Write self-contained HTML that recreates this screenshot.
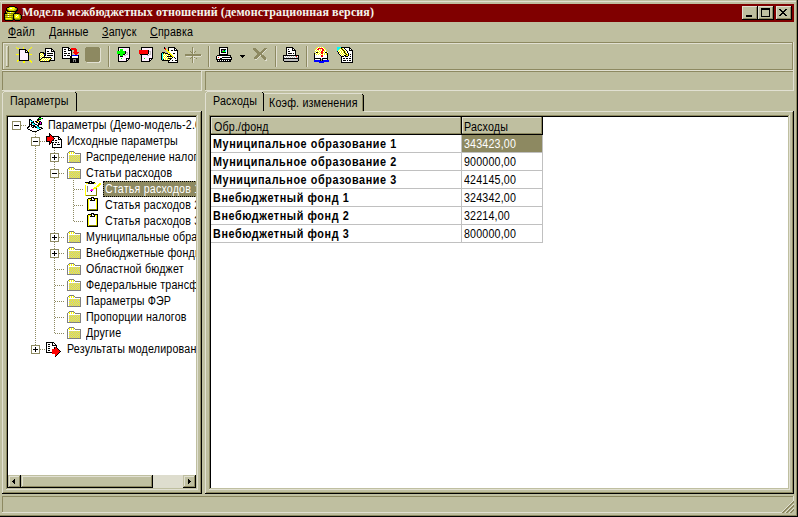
<!DOCTYPE html><html><head><meta charset="utf-8"><style>
html,body{margin:0;padding:0}
body{width:798px;height:517px;position:relative;overflow:hidden;background:#BFBFA0}
.a{position:absolute}
.t{position:absolute;font-family:"Liberation Sans",sans-serif;font-size:12px;line-height:14px;letter-spacing:0.2px;color:#000;white-space:nowrap;transform:scaleX(0.89);transform-origin:0 0}
u{text-decoration:underline;text-underline-offset:1px}
svg{display:block}
</style></head><body>
<div class="a" style="left:0px;top:1px;width:796px;height:1px;background:#E1E0D2;"></div>
<div class="a" style="left:1px;top:1px;width:1px;height:21px;background:#D6D5C2;"></div>
<div class="a" style="left:796px;top:0px;width:1px;height:516px;background:#8D8961;"></div>
<div class="a" style="left:797px;top:0px;width:1px;height:517px;background:#000000;"></div>
<div class="a" style="left:0px;top:515px;width:797px;height:1px;background:#8D8961;"></div>
<div class="a" style="left:0px;top:516px;width:798px;height:1px;background:#000000;"></div>
<div class="a" style="left:2px;top:4px;width:792px;height:18px;background:#800000;"></div>
<div class="t" style="left:22px;top:3px;font-family:'Liberation Serif',serif;font-weight:bold;font-size:12px;line-height:18px;letter-spacing:0.1px;color:#F4F4EC;transform:none;">Модель межбюджетных отношений (демонстрационная версия)</div>
<div class="a" style="left:742px;top:6px;width:16px;height:14px;background:#BFBFA0;"></div><div class="a" style="left:742px;top:6px;width:15px;height:1px;background:#E1E0D2;"></div><div class="a" style="left:742px;top:6px;width:1px;height:13px;background:#E1E0D2;"></div><div class="a" style="left:742px;top:19px;width:16px;height:1px;background:#000000;"></div><div class="a" style="left:757px;top:6px;width:1px;height:14px;background:#000000;"></div><div class="a" style="left:743px;top:18px;width:14px;height:1px;background:#8D8961;"></div><div class="a" style="left:756px;top:7px;width:1px;height:12px;background:#8D8961;"></div><div class="a" style="left:746px;top:15px;width:6px;height:2px;background:#000000;"></div>
<div class="a" style="left:758px;top:6px;width:16px;height:14px;background:#BFBFA0;"></div><div class="a" style="left:758px;top:6px;width:15px;height:1px;background:#E1E0D2;"></div><div class="a" style="left:758px;top:6px;width:1px;height:13px;background:#E1E0D2;"></div><div class="a" style="left:758px;top:19px;width:16px;height:1px;background:#000000;"></div><div class="a" style="left:773px;top:6px;width:1px;height:14px;background:#000000;"></div><div class="a" style="left:759px;top:18px;width:14px;height:1px;background:#8D8961;"></div><div class="a" style="left:772px;top:7px;width:1px;height:12px;background:#8D8961;"></div><div class="a" style="left:761px;top:8px;width:8px;height:1px;background:#000000;"></div><div class="a" style="left:761px;top:8px;width:1px;height:8px;background:#000000;"></div><div class="a" style="left:761px;top:16px;width:9px;height:1px;background:#000000;"></div><div class="a" style="left:769px;top:8px;width:1px;height:9px;background:#000000;"></div><div class="a" style="left:761px;top:9px;width:9px;height:1px;background:#000000;"></div>
<div class="a" style="left:776px;top:6px;width:16px;height:14px;background:#BFBFA0;"></div><div class="a" style="left:776px;top:6px;width:15px;height:1px;background:#E1E0D2;"></div><div class="a" style="left:776px;top:6px;width:1px;height:13px;background:#E1E0D2;"></div><div class="a" style="left:776px;top:19px;width:16px;height:1px;background:#000000;"></div><div class="a" style="left:791px;top:6px;width:1px;height:14px;background:#000000;"></div><div class="a" style="left:777px;top:18px;width:14px;height:1px;background:#8D8961;"></div><div class="a" style="left:790px;top:7px;width:1px;height:12px;background:#8D8961;"></div><svg style="position:absolute;left:779px;top:9px" width="8" height="7" viewBox="0 0 8 7" shape-rendering="crispEdges"><path fill="#000000" d="M0 0h2v1h-2zM6 0h2v1h-2zM1 1h2v1h-2zM5 1h2v1h-2zM2 2h4v1h-4zM3 3h2v1h-2zM2 4h4v1h-4zM1 5h2v1h-2zM5 5h2v1h-2zM0 6h2v1h-2zM6 6h2v1h-2z"/></svg>
<div class="t" style="left:8px;top:25px;"><u>Ф</u>айл</div>
<div class="t" style="left:49px;top:25px;"><u>Д</u>анные</div>
<div class="t" style="left:102px;top:25px;"><u>З</u>апуск</div>
<div class="t" style="left:150px;top:25px;"><u>С</u>правка</div>
<div class="a" style="left:2px;top:42px;width:791px;height:1px;background:#8D8961;"></div><div class="a" style="left:2px;top:42px;width:1px;height:28px;background:#8D8961;"></div><div class="a" style="left:2px;top:70px;width:792px;height:1px;background:#E1E0D2;"></div><div class="a" style="left:793px;top:42px;width:1px;height:29px;background:#E1E0D2;"></div>
<div class="a" style="left:3px;top:43px;width:789px;height:1px;background:#E1E0D2;"></div><div class="a" style="left:3px;top:43px;width:1px;height:26px;background:#E1E0D2;"></div><div class="a" style="left:3px;top:69px;width:790px;height:1px;background:#8D8961;"></div><div class="a" style="left:792px;top:43px;width:1px;height:27px;background:#8D8961;"></div>
<div class="a" style="left:6px;top:46px;width:2px;height:1px;background:#E1E0D2;"></div><div class="a" style="left:6px;top:46px;width:1px;height:20px;background:#E1E0D2;"></div><div class="a" style="left:6px;top:66px;width:3px;height:1px;background:#8D8961;"></div><div class="a" style="left:8px;top:46px;width:1px;height:21px;background:#8D8961;"></div>
<div class="a" style="left:108px;top:46px;width:1px;height:21px;background:#8D8961;"></div>
<div class="a" style="left:109px;top:46px;width:1px;height:21px;background:#E1E0D2;"></div>
<div class="a" style="left:208px;top:46px;width:1px;height:21px;background:#8D8961;"></div>
<div class="a" style="left:209px;top:46px;width:1px;height:21px;background:#E1E0D2;"></div>
<div class="a" style="left:275px;top:46px;width:1px;height:21px;background:#8D8961;"></div>
<div class="a" style="left:276px;top:46px;width:1px;height:21px;background:#E1E0D2;"></div>
<div class="a" style="left:306px;top:46px;width:1px;height:21px;background:#8D8961;"></div>
<div class="a" style="left:307px;top:46px;width:1px;height:21px;background:#E1E0D2;"></div>
<div class="a" style="left:2px;top:71px;width:199px;height:1px;background:#8D8961;"></div><div class="a" style="left:2px;top:71px;width:1px;height:19px;background:#8D8961;"></div><div class="a" style="left:2px;top:90px;width:200px;height:1px;background:#E1E0D2;"></div><div class="a" style="left:201px;top:71px;width:1px;height:20px;background:#E1E0D2;"></div>
<div class="a" style="left:205px;top:71px;width:588px;height:1px;background:#8D8961;"></div><div class="a" style="left:205px;top:71px;width:1px;height:19px;background:#8D8961;"></div><div class="a" style="left:205px;top:90px;width:589px;height:1px;background:#E1E0D2;"></div><div class="a" style="left:793px;top:71px;width:1px;height:20px;background:#E1E0D2;"></div>
<div class="a" style="left:77px;top:111px;width:125px;height:1px;background:#E1E0D2;"></div>
<div class="a" style="left:2px;top:93px;width:1px;height:400px;background:#E1E0D2;"></div>
<div class="a" style="left:200px;top:112px;width:1px;height:381px;background:#8D8961;"></div>
<div class="a" style="left:201px;top:111px;width:1px;height:383px;background:#000000;"></div>
<div class="a" style="left:3px;top:492px;width:198px;height:1px;background:#8D8961;"></div>
<div class="a" style="left:2px;top:493px;width:200px;height:1px;background:#000000;"></div>
<div class="a" style="left:4px;top:91px;width:71px;height:1px;background:#E1E0D2;"></div>
<div class="a" style="left:3px;top:92px;width:1px;height:1px;background:#E1E0D2;"></div>
<div class="a" style="left:75px;top:92px;width:1px;height:1px;background:#000000;"></div>
<div class="a" style="left:76px;top:93px;width:1px;height:18px;background:#000000;"></div>
<div class="t" style="left:10px;top:94px;">Параметры</div>
<div class="a" style="left:8px;top:117px;width:188px;height:371px;background:#FFFFFF;"></div>
<div class="a" style="left:6px;top:115px;width:191px;height:1px;background:#8D8961;"></div>
<div class="a" style="left:6px;top:115px;width:1px;height:375px;background:#8D8961;"></div>
<div class="a" style="left:7px;top:116px;width:189px;height:1px;background:#000000;"></div>
<div class="a" style="left:7px;top:116px;width:1px;height:372px;background:#000000;"></div>
<div class="a" style="left:196px;top:116px;width:1px;height:373px;background:#BFBFA0;"></div>
<div class="a" style="left:7px;top:488px;width:190px;height:1px;background:#BFBFA0;"></div>
<div class="a" style="left:197px;top:115px;width:1px;height:375px;background:#E1E0D2;"></div>
<div class="a" style="left:6px;top:489px;width:192px;height:1px;background:#E1E0D2;"></div>
<div class="a" style="left:364px;top:111px;width:430px;height:1px;background:#E1E0D2;"></div>
<div class="a" style="left:205px;top:93px;width:1px;height:400px;background:#E1E0D2;"></div>
<div class="a" style="left:792px;top:112px;width:1px;height:381px;background:#8D8961;"></div>
<div class="a" style="left:793px;top:111px;width:1px;height:383px;background:#000000;"></div>
<div class="a" style="left:206px;top:492px;width:587px;height:1px;background:#8D8961;"></div>
<div class="a" style="left:205px;top:493px;width:589px;height:1px;background:#000000;"></div>
<div class="a" style="left:207px;top:91px;width:56px;height:1px;background:#E1E0D2;"></div>
<div class="a" style="left:206px;top:92px;width:1px;height:1px;background:#E1E0D2;"></div>
<div class="a" style="left:262px;top:92px;width:1px;height:1px;background:#000000;"></div>
<div class="a" style="left:263px;top:93px;width:1px;height:18px;background:#000000;"></div>
<div class="t" style="left:213px;top:94px;">Расходы</div>
<div class="a" style="left:264px;top:93px;width:98px;height:1px;background:#E1E0D2;"></div>
<div class="a" style="left:362px;top:94px;width:1px;height:1px;background:#000000;"></div>
<div class="a" style="left:363px;top:95px;width:1px;height:16px;background:#000000;"></div>
<div class="a" style="left:362px;top:95px;width:1px;height:16px;background:#8D8961;"></div>
<div class="t" style="left:269px;top:96px;">Коэф. изменения</div>
<div class="a" style="left:211px;top:117px;width:578px;height:371px;background:#FFFFFF;"></div>
<div class="a" style="left:209px;top:115px;width:581px;height:1px;background:#8D8961;"></div>
<div class="a" style="left:209px;top:115px;width:1px;height:375px;background:#8D8961;"></div>
<div class="a" style="left:210px;top:116px;width:579px;height:1px;background:#000000;"></div>
<div class="a" style="left:210px;top:116px;width:1px;height:373px;background:#000000;"></div>
<div class="a" style="left:788px;top:116px;width:1px;height:373px;background:#BFBFA0;"></div>
<div class="a" style="left:210px;top:488px;width:579px;height:1px;background:#BFBFA0;"></div>
<div class="a" style="left:789px;top:115px;width:1px;height:375px;background:#E1E0D2;"></div>
<div class="a" style="left:209px;top:489px;width:581px;height:1px;background:#E1E0D2;"></div>
<div class="a" style="left:211px;top:117px;width:250px;height:17px;background:#BFBFA0;"></div>
<div class="a" style="left:211px;top:117px;width:249px;height:1px;background:#E1E0D2;"></div>
<div class="a" style="left:211px;top:117px;width:1px;height:16px;background:#E1E0D2;"></div>
<div class="a" style="left:211px;top:133px;width:250px;height:1px;background:#8D8961;"></div>
<div class="a" style="left:460px;top:117px;width:1px;height:17px;background:#8D8961;"></div>
<div class="a" style="left:462px;top:117px;width:80px;height:17px;background:#BFBFA0;"></div>
<div class="a" style="left:462px;top:117px;width:79px;height:1px;background:#E1E0D2;"></div>
<div class="a" style="left:462px;top:117px;width:1px;height:16px;background:#E1E0D2;"></div>
<div class="a" style="left:462px;top:133px;width:80px;height:1px;background:#8D8961;"></div>
<div class="a" style="left:541px;top:117px;width:1px;height:17px;background:#8D8961;"></div>
<div class="a" style="left:211px;top:134px;width:332px;height:1px;background:#000000;"></div>
<div class="a" style="left:461px;top:117px;width:1px;height:18px;background:#000000;"></div>
<div class="a" style="left:542px;top:116px;width:1px;height:19px;background:#000000;"></div>
<div class="t" style="left:214px;top:120px;">Обр./фонд</div>
<div class="t" style="left:464px;top:120px;">Расходы</div>
<div class="a" style="left:211px;top:152px;width:332px;height:1px;background:#C0C0C0;"></div>
<div class="a" style="left:462px;top:135px;width:80px;height:17px;background:#8D8961;"></div>
<div class="t" style="left:213px;top:137px;font-weight:bold;letter-spacing:0.65px;transform:scaleX(0.9);">Муниципальное образование 1</div>
<div class="t" style="left:464px;top:137px;color:#FFFFFF;">343423,00</div>
<div class="a" style="left:211px;top:170px;width:332px;height:1px;background:#C0C0C0;"></div>
<div class="t" style="left:213px;top:155px;font-weight:bold;letter-spacing:0.65px;transform:scaleX(0.9);">Муниципальное образование 2</div>
<div class="t" style="left:464px;top:155px;">900000,00</div>
<div class="a" style="left:211px;top:188px;width:332px;height:1px;background:#C0C0C0;"></div>
<div class="t" style="left:213px;top:173px;font-weight:bold;letter-spacing:0.65px;transform:scaleX(0.9);">Муниципальное образование 3</div>
<div class="t" style="left:464px;top:173px;">424145,00</div>
<div class="a" style="left:211px;top:206px;width:332px;height:1px;background:#C0C0C0;"></div>
<div class="t" style="left:213px;top:191px;font-weight:bold;letter-spacing:0.65px;transform:scaleX(0.9);">Внебюджетный фонд 1</div>
<div class="t" style="left:464px;top:191px;">324342,00</div>
<div class="a" style="left:211px;top:224px;width:332px;height:1px;background:#C0C0C0;"></div>
<div class="t" style="left:213px;top:209px;font-weight:bold;letter-spacing:0.65px;transform:scaleX(0.9);">Внебюджетный фонд 2</div>
<div class="t" style="left:464px;top:209px;">32214,00</div>
<div class="a" style="left:211px;top:242px;width:332px;height:1px;background:#C0C0C0;"></div>
<div class="t" style="left:213px;top:227px;font-weight:bold;letter-spacing:0.65px;transform:scaleX(0.9);">Внебюджетный фонд 3</div>
<div class="t" style="left:464px;top:227px;">800000,00</div>
<div class="a" style="left:461px;top:135px;width:1px;height:108px;background:#C0C0C0;"></div>
<div class="a" style="left:542px;top:135px;width:1px;height:108px;background:#C0C0C0;"></div>
<div class="a" style="left:2px;top:496px;width:791px;height:1px;background:#8D8961;"></div><div class="a" style="left:2px;top:496px;width:1px;height:16px;background:#8D8961;"></div><div class="a" style="left:2px;top:512px;width:792px;height:1px;background:#E1E0D2;"></div><div class="a" style="left:793px;top:496px;width:1px;height:17px;background:#E1E0D2;"></div>
<svg style="position:absolute;left:781px;top:500px" width="13" height="13" viewBox="0 0 13 13" shape-rendering="crispEdges"><path fill="#E1E0D2" d="M12 0h1v1h-1zM11 1h1v1h-1zM10 2h1v1h-1zM9 3h1v1h-1zM8 4h1v1h-1zM12 4h1v1h-1zM7 5h1v1h-1zM11 5h1v1h-1zM6 6h1v1h-1zM10 6h1v1h-1zM5 7h1v1h-1zM9 7h1v1h-1zM4 8h1v1h-1zM8 8h1v1h-1zM12 8h1v1h-1zM3 9h1v1h-1zM7 9h1v1h-1zM11 9h1v1h-1zM2 10h1v1h-1zM6 10h1v1h-1zM10 10h1v1h-1zM1 11h1v1h-1zM5 11h1v1h-1zM9 11h1v1h-1zM0 12h1v1h-1zM4 12h1v1h-1zM8 12h1v1h-1z"/><path fill="#8D8961" d="M12 1h1v1h-1zM11 2h2v1h-2zM10 3h2v1h-2zM9 4h2v1h-2zM8 5h2v1h-2zM12 5h1v1h-1zM7 6h2v1h-2zM11 6h2v1h-2zM6 7h2v1h-2zM10 7h2v1h-2zM5 8h2v1h-2zM9 8h2v1h-2zM4 9h2v1h-2zM8 9h2v1h-2zM12 9h1v1h-1zM3 10h2v1h-2zM7 10h2v1h-2zM11 10h2v1h-2zM2 11h2v1h-2zM6 11h2v1h-2zM10 11h2v1h-2zM1 12h2v1h-2zM5 12h2v1h-2zM9 12h2v1h-2z"/><path fill="#BFBFA0" d="M12 3h1v1h-1zM11 4h1v1h-1zM10 5h1v1h-1zM9 6h1v1h-1zM8 7h1v1h-1zM12 7h1v1h-1zM7 8h1v1h-1zM11 8h1v1h-1zM6 9h1v1h-1zM10 9h1v1h-1zM5 10h1v1h-1zM9 10h1v1h-1zM4 11h1v1h-1zM8 11h1v1h-1zM12 11h1v1h-1zM3 12h1v1h-1zM7 12h1v1h-1zM11 12h2v1h-2z"/></svg>
<div class="a" style="left:8px;top:117px;width:188px;height:358px;overflow:hidden"><div class="a" style="left:-8px;top:-117px;width:798px;height:517px"><div class="a" style="left:35px;top:132px;width:1px;height:214px;background:repeating-linear-gradient(to bottom,#8D8961 0 1px,transparent 1px 2px)"></div><div class="a" style="left:54px;top:148px;width:1px;height:186px;background:repeating-linear-gradient(to bottom,#8D8961 0 1px,transparent 1px 2px)"></div><div class="a" style="left:73px;top:180px;width:1px;height:42px;background:repeating-linear-gradient(to bottom,#8D8961 0 1px,transparent 1px 2px)"></div><div class="a" style="left:21px;top:125px;width:5px;height:1px;background:repeating-linear-gradient(to right,#8D8961 0 1px,transparent 1px 2px)"></div><div class="a" style="left:12px;top:121px;width:9px;height:9px;background:#FFFFFF;box-sizing:border-box;border:1px solid #8D8961;"></div><div class="a" style="left:14px;top:125px;width:5px;height:1px;background:#000000;"></div><svg style="position:absolute;left:26px;top:116px" width="19" height="16" viewBox="0 0 19 16" shape-rendering="crispEdges"><path fill="#000000" d="M13 1h2v1h-2zM12 2h1v1h-1zM16 2h1v1h-1zM3 3h2v1h-2zM11 3h4v1h-4zM3 4h1v1h-1zM5 4h1v1h-1zM11 4h2v1h-2zM3 5h1v1h-1zM7 5h1v1h-1zM9 5h2v1h-2zM13 5h2v1h-2zM3 6h1v1h-1zM5 6h3v1h-3zM10 6h2v1h-2zM13 6h1v1h-1zM15 6h1v1h-1zM3 7h1v1h-1zM5 7h1v1h-1zM8 7h1v1h-1zM12 7h2v1h-2zM15 7h1v1h-1zM3 8h3v1h-3zM9 8h2v1h-2zM12 8h4v1h-4zM3 9h1v1h-1zM5 9h4v1h-4zM11 9h2v1h-2zM2 10h2v1h-2zM5 10h1v1h-1zM7 10h3v1h-3zM12 10h1v1h-1zM1 11h2v1h-2zM6 11h2v1h-2zM9 11h2v1h-2zM13 11h3v1h-3zM1 12h1v1h-1zM15 12h2v1h-2zM2 13h2v1h-2zM13 13h2v1h-2zM4 14h2v1h-2zM11 14h2v1h-2zM6 15h5v1h-5z"/><path fill="#00FF00" d="M13 2h3v1h-3z"/><path fill="#00FFFF" d="M4 4h1v1h-1zM5 5h2v1h-2zM6 7h2v1h-2zM7 8h2v1h-2zM10 10h2v1h-2zM11 11h2v1h-2zM11 12h3v1h-3z"/><path fill="#FFFFFF" d="M4 5h1v1h-1zM4 6h1v1h-1zM12 6h1v1h-1zM4 7h1v1h-1zM11 7h1v1h-1zM6 8h1v1h-1zM4 9h1v1h-1zM9 9h2v1h-2zM4 10h1v1h-1zM6 10h1v1h-1zM3 11h3v1h-3zM8 11h1v1h-1zM2 12h9v1h-9zM14 12h1v1h-1zM4 13h9v1h-9zM6 14h5v1h-5z"/><path fill="#FFFF00" d="M11 5h2v1h-2z"/><path fill="#FF00FF" d="M14 6h1v1h-1zM14 7h1v1h-1z"/></svg><div class="t" style="left:48px;top:118px;white-space:nowrap;">Параметры (Демо-модель-2.0)</div><div class="a" style="left:40px;top:141px;width:5px;height:1px;background:repeating-linear-gradient(to right,#8D8961 0 1px,transparent 1px 2px)"></div><div class="a" style="left:31px;top:137px;width:9px;height:9px;background:#FFFFFF;box-sizing:border-box;border:1px solid #8D8961;"></div><div class="a" style="left:33px;top:141px;width:5px;height:1px;background:#000000;"></div><svg style="position:absolute;left:45px;top:132px" width="19" height="16" viewBox="0 0 19 16" shape-rendering="crispEdges"><path fill="#000000" d="M4 1h1v1h-1zM4 2h2v1h-2zM4 3h1v1h-1zM6 3h1v1h-1zM1 4h4v1h-4zM7 4h7v1h-7zM1 5h1v1h-1zM8 5h1v1h-1zM13 5h2v1h-2zM1 6h1v1h-1zM9 6h1v1h-1zM13 6h1v1h-1zM15 6h1v1h-1zM1 7h1v1h-1zM8 7h1v1h-1zM13 7h4v1h-4zM1 8h1v1h-1zM7 8h2v1h-2zM10 8h2v1h-2zM16 8h1v1h-1zM1 9h4v1h-4zM6 9h1v1h-1zM16 9h1v1h-1zM4 10h1v1h-1zM6 10h3v1h-3zM10 10h2v1h-2zM13 10h1v1h-1zM16 10h1v1h-1zM4 11h2v1h-2zM7 11h1v1h-1zM16 11h1v1h-1zM4 12h1v1h-1zM7 12h1v1h-1zM9 12h2v1h-2zM12 12h3v1h-3zM16 12h1v1h-1zM7 13h1v1h-1zM16 13h1v1h-1zM7 14h1v1h-1zM16 14h1v1h-1zM7 15h10v1h-10z"/><path fill="#FF0000" d="M5 3h1v1h-1zM5 4h2v1h-2zM2 5h6v1h-6zM2 6h7v1h-7zM2 7h6v1h-6zM2 8h5v1h-5zM5 9h1v1h-1zM5 10h1v1h-1z"/><path fill="#FFFFFF" d="M9 5h4v1h-4zM10 6h3v1h-3zM14 6h1v1h-1zM9 7h4v1h-4zM9 8h1v1h-1zM12 8h4v1h-4zM7 9h9v1h-9zM9 10h1v1h-1zM12 10h1v1h-1zM14 10h2v1h-2zM8 11h8v1h-8zM8 12h1v1h-1zM11 12h1v1h-1zM15 12h1v1h-1zM8 13h8v1h-8zM8 14h8v1h-8z"/></svg><div class="t" style="left:67px;top:134px;white-space:nowrap;">Исходные параметры</div><div class="a" style="left:59px;top:157px;width:5px;height:1px;background:repeating-linear-gradient(to right,#8D8961 0 1px,transparent 1px 2px)"></div><div class="a" style="left:50px;top:153px;width:9px;height:9px;background:#FFFFFF;box-sizing:border-box;border:1px solid #8D8961;"></div><div class="a" style="left:52px;top:157px;width:5px;height:1px;background:#000000;"></div><div class="a" style="left:54px;top:155px;width:1px;height:5px;background:#000000;"></div><svg style="position:absolute;left:64px;top:148px" width="19" height="15" viewBox="0 0 19 15" shape-rendering="crispEdges"><path fill="#808080" d="M5 3h5v1h-5zM4 4h1v1h-1zM10 4h1v1h-1zM3 5h1v1h-1zM11 5h6v1h-6zM3 6h1v1h-1zM16 6h1v1h-1zM3 7h1v1h-1zM16 7h1v1h-1zM3 8h1v1h-1zM16 8h1v1h-1zM3 9h1v1h-1zM16 9h1v1h-1zM3 10h1v1h-1zM16 10h1v1h-1zM3 11h1v1h-1zM16 11h1v1h-1zM3 12h1v1h-1zM16 12h1v1h-1zM3 13h1v1h-1zM16 13h1v1h-1zM3 14h14v1h-14z"/><path fill="#FFFF00" d="M5 4h1v1h-1zM7 4h1v1h-1zM9 4h1v1h-1zM5 5h1v1h-1zM7 5h1v1h-1zM9 5h1v1h-1zM5 7h1v1h-1zM7 7h1v1h-1zM9 7h1v1h-1zM11 7h1v1h-1zM13 7h1v1h-1zM15 7h1v1h-1zM6 8h1v1h-1zM8 8h1v1h-1zM10 8h1v1h-1zM12 8h1v1h-1zM14 8h1v1h-1zM5 9h1v1h-1zM7 9h1v1h-1zM9 9h1v1h-1zM11 9h1v1h-1zM13 9h1v1h-1zM15 9h1v1h-1zM6 10h1v1h-1zM8 10h1v1h-1zM10 10h1v1h-1zM12 10h1v1h-1zM14 10h1v1h-1zM5 11h1v1h-1zM7 11h1v1h-1zM9 11h1v1h-1zM11 11h1v1h-1zM13 11h1v1h-1zM15 11h1v1h-1zM6 12h1v1h-1zM8 12h1v1h-1zM10 12h1v1h-1zM12 12h1v1h-1zM14 12h1v1h-1zM5 13h1v1h-1zM7 13h1v1h-1zM9 13h1v1h-1zM11 13h1v1h-1zM13 13h1v1h-1zM15 13h1v1h-1z"/><path fill="#FFFFFF" d="M6 4h1v1h-1zM8 4h1v1h-1zM4 5h1v1h-1zM6 5h1v1h-1zM8 5h1v1h-1zM10 5h1v1h-1zM4 6h12v1h-12zM4 7h1v1h-1zM4 8h1v1h-1zM4 9h1v1h-1zM4 10h1v1h-1zM4 11h1v1h-1zM4 12h1v1h-1zM4 13h1v1h-1z"/><path fill="#B4B4CC" d="M6 7h1v1h-1zM8 7h1v1h-1zM10 7h1v1h-1zM12 7h1v1h-1zM14 7h1v1h-1zM5 8h1v1h-1zM7 8h1v1h-1zM9 8h1v1h-1zM11 8h1v1h-1zM13 8h1v1h-1zM15 8h1v1h-1zM6 9h1v1h-1zM8 9h1v1h-1zM10 9h1v1h-1zM12 9h1v1h-1zM14 9h1v1h-1zM5 10h1v1h-1zM7 10h1v1h-1zM9 10h1v1h-1zM11 10h1v1h-1zM13 10h1v1h-1zM15 10h1v1h-1zM6 11h1v1h-1zM8 11h1v1h-1zM10 11h1v1h-1zM12 11h1v1h-1zM14 11h1v1h-1zM5 12h1v1h-1zM7 12h1v1h-1zM9 12h1v1h-1zM11 12h1v1h-1zM13 12h1v1h-1zM15 12h1v1h-1zM6 13h1v1h-1zM8 13h1v1h-1zM10 13h1v1h-1zM12 13h1v1h-1zM14 13h1v1h-1z"/></svg><div class="t" style="left:86px;top:150px;white-space:nowrap;">Распределение налогов</div><div class="a" style="left:59px;top:173px;width:5px;height:1px;background:repeating-linear-gradient(to right,#8D8961 0 1px,transparent 1px 2px)"></div><div class="a" style="left:50px;top:169px;width:9px;height:9px;background:#FFFFFF;box-sizing:border-box;border:1px solid #8D8961;"></div><div class="a" style="left:52px;top:173px;width:5px;height:1px;background:#000000;"></div><svg style="position:absolute;left:64px;top:164px" width="19" height="15" viewBox="0 0 19 15" shape-rendering="crispEdges"><path fill="#808080" d="M5 3h5v1h-5zM4 4h1v1h-1zM10 4h1v1h-1zM3 5h1v1h-1zM11 5h6v1h-6zM3 6h1v1h-1zM16 6h1v1h-1zM3 7h1v1h-1zM16 7h1v1h-1zM3 8h1v1h-1zM16 8h1v1h-1zM3 9h1v1h-1zM16 9h1v1h-1zM3 10h1v1h-1zM16 10h1v1h-1zM3 11h1v1h-1zM16 11h1v1h-1zM3 12h1v1h-1zM16 12h1v1h-1zM3 13h1v1h-1zM16 13h1v1h-1zM3 14h14v1h-14z"/><path fill="#FFFF00" d="M5 4h1v1h-1zM7 4h1v1h-1zM9 4h1v1h-1zM5 5h1v1h-1zM7 5h1v1h-1zM9 5h1v1h-1zM5 7h1v1h-1zM7 7h1v1h-1zM9 7h1v1h-1zM11 7h1v1h-1zM13 7h1v1h-1zM15 7h1v1h-1zM6 8h1v1h-1zM8 8h1v1h-1zM10 8h1v1h-1zM12 8h1v1h-1zM14 8h1v1h-1zM5 9h1v1h-1zM7 9h1v1h-1zM9 9h1v1h-1zM11 9h1v1h-1zM13 9h1v1h-1zM15 9h1v1h-1zM6 10h1v1h-1zM8 10h1v1h-1zM10 10h1v1h-1zM12 10h1v1h-1zM14 10h1v1h-1zM5 11h1v1h-1zM7 11h1v1h-1zM9 11h1v1h-1zM11 11h1v1h-1zM13 11h1v1h-1zM15 11h1v1h-1zM6 12h1v1h-1zM8 12h1v1h-1zM10 12h1v1h-1zM12 12h1v1h-1zM14 12h1v1h-1zM5 13h1v1h-1zM7 13h1v1h-1zM9 13h1v1h-1zM11 13h1v1h-1zM13 13h1v1h-1zM15 13h1v1h-1z"/><path fill="#FFFFFF" d="M6 4h1v1h-1zM8 4h1v1h-1zM4 5h1v1h-1zM6 5h1v1h-1zM8 5h1v1h-1zM10 5h1v1h-1zM4 6h12v1h-12zM4 7h1v1h-1zM4 8h1v1h-1zM4 9h1v1h-1zM4 10h1v1h-1zM4 11h1v1h-1zM4 12h1v1h-1zM4 13h1v1h-1z"/><path fill="#B4B4CC" d="M6 7h1v1h-1zM8 7h1v1h-1zM10 7h1v1h-1zM12 7h1v1h-1zM14 7h1v1h-1zM5 8h1v1h-1zM7 8h1v1h-1zM9 8h1v1h-1zM11 8h1v1h-1zM13 8h1v1h-1zM15 8h1v1h-1zM6 9h1v1h-1zM8 9h1v1h-1zM10 9h1v1h-1zM12 9h1v1h-1zM14 9h1v1h-1zM5 10h1v1h-1zM7 10h1v1h-1zM9 10h1v1h-1zM11 10h1v1h-1zM13 10h1v1h-1zM15 10h1v1h-1zM6 11h1v1h-1zM8 11h1v1h-1zM10 11h1v1h-1zM12 11h1v1h-1zM14 11h1v1h-1zM5 12h1v1h-1zM7 12h1v1h-1zM9 12h1v1h-1zM11 12h1v1h-1zM13 12h1v1h-1zM15 12h1v1h-1zM6 13h1v1h-1zM8 13h1v1h-1zM10 13h1v1h-1zM12 13h1v1h-1zM14 13h1v1h-1z"/></svg><div class="t" style="left:86px;top:166px;white-space:nowrap;">Статьи расходов</div><div class="a" style="left:74px;top:189px;width:9px;height:1px;background:repeating-linear-gradient(to right,#8D8961 0 1px,transparent 1px 2px)"></div><svg style="position:absolute;left:83px;top:180px" width="19" height="16" viewBox="0 0 19 16" shape-rendering="crispEdges"><path fill="#000000" d="M6 1h3v1h-3zM2 2h5v1h-5zM8 2h4v1h-4zM5 3h6v1h-6zM8 11h1v1h-1z"/><path fill="#FFFFFF" d="M7 2h1v1h-1zM3 4h9v1h-9zM3 5h9v1h-9zM3 6h1v1h-1zM5 6h7v1h-7zM3 7h1v1h-1zM5 7h6v1h-6zM3 8h1v1h-1zM5 8h5v1h-5zM3 9h1v1h-1zM5 9h3v1h-3zM11 9h2v1h-2zM3 10h1v1h-1zM5 10h2v1h-2zM10 10h3v1h-3zM3 11h1v1h-1zM5 11h3v1h-3zM9 11h4v1h-4zM3 12h10v1h-10zM3 13h10v1h-10zM3 14h10v1h-10z"/><path fill="#FFFF00" d="M3 3h2v1h-2zM11 3h2v1h-2zM16 3h2v1h-2zM15 4h3v1h-3zM2 5h1v1h-1zM14 5h3v1h-3zM2 6h1v1h-1zM13 6h3v1h-3zM2 7h1v1h-1zM11 7h3v1h-3zM2 8h1v1h-1zM10 8h3v1h-3zM2 9h1v1h-1zM10 9h1v1h-1zM2 10h1v1h-1zM2 11h1v1h-1zM2 12h1v1h-1zM2 13h1v1h-1zM2 14h1v1h-1zM2 15h1v1h-1z"/><path fill="#808080" d="M4 6h1v1h-1zM4 7h1v1h-1zM4 8h1v1h-1zM4 9h1v1h-1zM4 10h1v1h-1zM4 11h1v1h-1z"/><path fill="#808000" d="M13 8h1v1h-1zM13 9h1v1h-1zM13 10h1v1h-1zM13 11h1v1h-1zM13 12h1v1h-1zM13 13h1v1h-1zM13 14h1v1h-1zM3 15h11v1h-11z"/><path fill="#FF00FF" d="M8 9h2v1h-2zM7 10h3v1h-3z"/></svg><div class="a" style="left:103px;top:181px;width:200px;height:16px;background:#8D8961;"></div><div class="a" style="left:103px;top:181px;width:200px;height:16px;box-sizing:border-box;border:1px dotted #000"></div><div class="t" style="left:105px;top:182px;color:#FFFFFF;white-space:nowrap;">Статья расходов 1</div><div class="a" style="left:74px;top:205px;width:9px;height:1px;background:repeating-linear-gradient(to right,#8D8961 0 1px,transparent 1px 2px)"></div><svg style="position:absolute;left:83px;top:196px" width="19" height="15" viewBox="0 0 19 15" shape-rendering="crispEdges"><path fill="#000000" d="M8 1h3v1h-3zM5 2h4v1h-4zM10 2h5v1h-5zM4 3h1v1h-1zM8 3h1v1h-1zM11 3h1v1h-1zM14 3h1v1h-1zM4 4h1v1h-1zM7 4h5v1h-5zM14 4h1v1h-1zM4 5h1v1h-1zM14 5h1v1h-1zM4 6h1v1h-1zM14 6h1v1h-1zM4 7h1v1h-1zM14 7h1v1h-1zM4 8h1v1h-1zM14 8h1v1h-1zM4 9h1v1h-1zM14 9h1v1h-1zM4 10h1v1h-1zM14 10h1v1h-1zM4 11h1v1h-1zM14 11h1v1h-1zM4 12h1v1h-1zM14 12h1v1h-1zM4 13h1v1h-1zM14 13h1v1h-1zM4 14h11v1h-11z"/><path fill="#FFFFFF" d="M9 2h1v1h-1zM9 3h2v1h-2zM6 4h1v1h-1zM12 4h1v1h-1zM6 5h7v1h-7zM6 6h7v1h-7zM6 7h7v1h-7zM6 8h7v1h-7zM6 9h7v1h-7zM6 10h7v1h-7zM6 11h7v1h-7zM6 12h7v1h-7z"/><path fill="#FFFF00" d="M5 3h3v1h-3zM12 3h2v1h-2zM5 4h1v1h-1zM13 4h1v1h-1zM5 5h1v1h-1zM13 5h1v1h-1zM5 6h1v1h-1zM13 6h1v1h-1zM5 7h1v1h-1zM13 7h1v1h-1zM5 8h1v1h-1zM13 8h1v1h-1zM5 9h1v1h-1zM13 9h1v1h-1zM5 10h1v1h-1zM13 10h1v1h-1zM5 11h1v1h-1zM13 11h1v1h-1zM5 12h1v1h-1zM13 12h1v1h-1zM5 13h1v1h-1z"/><path fill="#808000" d="M6 13h8v1h-8z"/></svg><div class="t" style="left:105px;top:198px;white-space:nowrap;">Статья расходов 2</div><div class="a" style="left:74px;top:221px;width:9px;height:1px;background:repeating-linear-gradient(to right,#8D8961 0 1px,transparent 1px 2px)"></div><svg style="position:absolute;left:83px;top:212px" width="19" height="15" viewBox="0 0 19 15" shape-rendering="crispEdges"><path fill="#000000" d="M8 1h3v1h-3zM5 2h4v1h-4zM10 2h5v1h-5zM4 3h1v1h-1zM8 3h1v1h-1zM11 3h1v1h-1zM14 3h1v1h-1zM4 4h1v1h-1zM7 4h5v1h-5zM14 4h1v1h-1zM4 5h1v1h-1zM14 5h1v1h-1zM4 6h1v1h-1zM14 6h1v1h-1zM4 7h1v1h-1zM14 7h1v1h-1zM4 8h1v1h-1zM14 8h1v1h-1zM4 9h1v1h-1zM14 9h1v1h-1zM4 10h1v1h-1zM14 10h1v1h-1zM4 11h1v1h-1zM14 11h1v1h-1zM4 12h1v1h-1zM14 12h1v1h-1zM4 13h1v1h-1zM14 13h1v1h-1zM4 14h11v1h-11z"/><path fill="#FFFFFF" d="M9 2h1v1h-1zM9 3h2v1h-2zM6 4h1v1h-1zM12 4h1v1h-1zM6 5h7v1h-7zM6 6h7v1h-7zM6 7h7v1h-7zM6 8h7v1h-7zM6 9h7v1h-7zM6 10h7v1h-7zM6 11h7v1h-7zM6 12h7v1h-7z"/><path fill="#FFFF00" d="M5 3h3v1h-3zM12 3h2v1h-2zM5 4h1v1h-1zM13 4h1v1h-1zM5 5h1v1h-1zM13 5h1v1h-1zM5 6h1v1h-1zM13 6h1v1h-1zM5 7h1v1h-1zM13 7h1v1h-1zM5 8h1v1h-1zM13 8h1v1h-1zM5 9h1v1h-1zM13 9h1v1h-1zM5 10h1v1h-1zM13 10h1v1h-1zM5 11h1v1h-1zM13 11h1v1h-1zM5 12h1v1h-1zM13 12h1v1h-1zM5 13h1v1h-1z"/><path fill="#808000" d="M6 13h8v1h-8z"/></svg><div class="t" style="left:105px;top:214px;white-space:nowrap;">Статья расходов 3</div><div class="a" style="left:59px;top:237px;width:5px;height:1px;background:repeating-linear-gradient(to right,#8D8961 0 1px,transparent 1px 2px)"></div><div class="a" style="left:50px;top:233px;width:9px;height:9px;background:#FFFFFF;box-sizing:border-box;border:1px solid #8D8961;"></div><div class="a" style="left:52px;top:237px;width:5px;height:1px;background:#000000;"></div><div class="a" style="left:54px;top:235px;width:1px;height:5px;background:#000000;"></div><svg style="position:absolute;left:64px;top:228px" width="19" height="15" viewBox="0 0 19 15" shape-rendering="crispEdges"><path fill="#808080" d="M5 3h5v1h-5zM4 4h1v1h-1zM10 4h1v1h-1zM3 5h1v1h-1zM11 5h6v1h-6zM3 6h1v1h-1zM16 6h1v1h-1zM3 7h1v1h-1zM16 7h1v1h-1zM3 8h1v1h-1zM16 8h1v1h-1zM3 9h1v1h-1zM16 9h1v1h-1zM3 10h1v1h-1zM16 10h1v1h-1zM3 11h1v1h-1zM16 11h1v1h-1zM3 12h1v1h-1zM16 12h1v1h-1zM3 13h1v1h-1zM16 13h1v1h-1zM3 14h14v1h-14z"/><path fill="#FFFF00" d="M5 4h1v1h-1zM7 4h1v1h-1zM9 4h1v1h-1zM5 5h1v1h-1zM7 5h1v1h-1zM9 5h1v1h-1zM5 7h1v1h-1zM7 7h1v1h-1zM9 7h1v1h-1zM11 7h1v1h-1zM13 7h1v1h-1zM15 7h1v1h-1zM6 8h1v1h-1zM8 8h1v1h-1zM10 8h1v1h-1zM12 8h1v1h-1zM14 8h1v1h-1zM5 9h1v1h-1zM7 9h1v1h-1zM9 9h1v1h-1zM11 9h1v1h-1zM13 9h1v1h-1zM15 9h1v1h-1zM6 10h1v1h-1zM8 10h1v1h-1zM10 10h1v1h-1zM12 10h1v1h-1zM14 10h1v1h-1zM5 11h1v1h-1zM7 11h1v1h-1zM9 11h1v1h-1zM11 11h1v1h-1zM13 11h1v1h-1zM15 11h1v1h-1zM6 12h1v1h-1zM8 12h1v1h-1zM10 12h1v1h-1zM12 12h1v1h-1zM14 12h1v1h-1zM5 13h1v1h-1zM7 13h1v1h-1zM9 13h1v1h-1zM11 13h1v1h-1zM13 13h1v1h-1zM15 13h1v1h-1z"/><path fill="#FFFFFF" d="M6 4h1v1h-1zM8 4h1v1h-1zM4 5h1v1h-1zM6 5h1v1h-1zM8 5h1v1h-1zM10 5h1v1h-1zM4 6h12v1h-12zM4 7h1v1h-1zM4 8h1v1h-1zM4 9h1v1h-1zM4 10h1v1h-1zM4 11h1v1h-1zM4 12h1v1h-1zM4 13h1v1h-1z"/><path fill="#B4B4CC" d="M6 7h1v1h-1zM8 7h1v1h-1zM10 7h1v1h-1zM12 7h1v1h-1zM14 7h1v1h-1zM5 8h1v1h-1zM7 8h1v1h-1zM9 8h1v1h-1zM11 8h1v1h-1zM13 8h1v1h-1zM15 8h1v1h-1zM6 9h1v1h-1zM8 9h1v1h-1zM10 9h1v1h-1zM12 9h1v1h-1zM14 9h1v1h-1zM5 10h1v1h-1zM7 10h1v1h-1zM9 10h1v1h-1zM11 10h1v1h-1zM13 10h1v1h-1zM15 10h1v1h-1zM6 11h1v1h-1zM8 11h1v1h-1zM10 11h1v1h-1zM12 11h1v1h-1zM14 11h1v1h-1zM5 12h1v1h-1zM7 12h1v1h-1zM9 12h1v1h-1zM11 12h1v1h-1zM13 12h1v1h-1zM15 12h1v1h-1zM6 13h1v1h-1zM8 13h1v1h-1zM10 13h1v1h-1zM12 13h1v1h-1zM14 13h1v1h-1z"/></svg><div class="t" style="left:86px;top:230px;white-space:nowrap;">Муниципальные образования</div><div class="a" style="left:59px;top:253px;width:5px;height:1px;background:repeating-linear-gradient(to right,#8D8961 0 1px,transparent 1px 2px)"></div><div class="a" style="left:50px;top:249px;width:9px;height:9px;background:#FFFFFF;box-sizing:border-box;border:1px solid #8D8961;"></div><div class="a" style="left:52px;top:253px;width:5px;height:1px;background:#000000;"></div><div class="a" style="left:54px;top:251px;width:1px;height:5px;background:#000000;"></div><svg style="position:absolute;left:64px;top:244px" width="19" height="15" viewBox="0 0 19 15" shape-rendering="crispEdges"><path fill="#808080" d="M5 3h5v1h-5zM4 4h1v1h-1zM10 4h1v1h-1zM3 5h1v1h-1zM11 5h6v1h-6zM3 6h1v1h-1zM16 6h1v1h-1zM3 7h1v1h-1zM16 7h1v1h-1zM3 8h1v1h-1zM16 8h1v1h-1zM3 9h1v1h-1zM16 9h1v1h-1zM3 10h1v1h-1zM16 10h1v1h-1zM3 11h1v1h-1zM16 11h1v1h-1zM3 12h1v1h-1zM16 12h1v1h-1zM3 13h1v1h-1zM16 13h1v1h-1zM3 14h14v1h-14z"/><path fill="#FFFF00" d="M5 4h1v1h-1zM7 4h1v1h-1zM9 4h1v1h-1zM5 5h1v1h-1zM7 5h1v1h-1zM9 5h1v1h-1zM5 7h1v1h-1zM7 7h1v1h-1zM9 7h1v1h-1zM11 7h1v1h-1zM13 7h1v1h-1zM15 7h1v1h-1zM6 8h1v1h-1zM8 8h1v1h-1zM10 8h1v1h-1zM12 8h1v1h-1zM14 8h1v1h-1zM5 9h1v1h-1zM7 9h1v1h-1zM9 9h1v1h-1zM11 9h1v1h-1zM13 9h1v1h-1zM15 9h1v1h-1zM6 10h1v1h-1zM8 10h1v1h-1zM10 10h1v1h-1zM12 10h1v1h-1zM14 10h1v1h-1zM5 11h1v1h-1zM7 11h1v1h-1zM9 11h1v1h-1zM11 11h1v1h-1zM13 11h1v1h-1zM15 11h1v1h-1zM6 12h1v1h-1zM8 12h1v1h-1zM10 12h1v1h-1zM12 12h1v1h-1zM14 12h1v1h-1zM5 13h1v1h-1zM7 13h1v1h-1zM9 13h1v1h-1zM11 13h1v1h-1zM13 13h1v1h-1zM15 13h1v1h-1z"/><path fill="#FFFFFF" d="M6 4h1v1h-1zM8 4h1v1h-1zM4 5h1v1h-1zM6 5h1v1h-1zM8 5h1v1h-1zM10 5h1v1h-1zM4 6h12v1h-12zM4 7h1v1h-1zM4 8h1v1h-1zM4 9h1v1h-1zM4 10h1v1h-1zM4 11h1v1h-1zM4 12h1v1h-1zM4 13h1v1h-1z"/><path fill="#B4B4CC" d="M6 7h1v1h-1zM8 7h1v1h-1zM10 7h1v1h-1zM12 7h1v1h-1zM14 7h1v1h-1zM5 8h1v1h-1zM7 8h1v1h-1zM9 8h1v1h-1zM11 8h1v1h-1zM13 8h1v1h-1zM15 8h1v1h-1zM6 9h1v1h-1zM8 9h1v1h-1zM10 9h1v1h-1zM12 9h1v1h-1zM14 9h1v1h-1zM5 10h1v1h-1zM7 10h1v1h-1zM9 10h1v1h-1zM11 10h1v1h-1zM13 10h1v1h-1zM15 10h1v1h-1zM6 11h1v1h-1zM8 11h1v1h-1zM10 11h1v1h-1zM12 11h1v1h-1zM14 11h1v1h-1zM5 12h1v1h-1zM7 12h1v1h-1zM9 12h1v1h-1zM11 12h1v1h-1zM13 12h1v1h-1zM15 12h1v1h-1zM6 13h1v1h-1zM8 13h1v1h-1zM10 13h1v1h-1zM12 13h1v1h-1zM14 13h1v1h-1z"/></svg><div class="t" style="left:86px;top:246px;white-space:nowrap;">Внебюджетные фонды</div><div class="a" style="left:55px;top:269px;width:9px;height:1px;background:repeating-linear-gradient(to right,#8D8961 0 1px,transparent 1px 2px)"></div><svg style="position:absolute;left:64px;top:260px" width="19" height="15" viewBox="0 0 19 15" shape-rendering="crispEdges"><path fill="#808080" d="M5 3h5v1h-5zM4 4h1v1h-1zM10 4h1v1h-1zM3 5h1v1h-1zM11 5h6v1h-6zM3 6h1v1h-1zM16 6h1v1h-1zM3 7h1v1h-1zM16 7h1v1h-1zM3 8h1v1h-1zM16 8h1v1h-1zM3 9h1v1h-1zM16 9h1v1h-1zM3 10h1v1h-1zM16 10h1v1h-1zM3 11h1v1h-1zM16 11h1v1h-1zM3 12h1v1h-1zM16 12h1v1h-1zM3 13h1v1h-1zM16 13h1v1h-1zM3 14h14v1h-14z"/><path fill="#FFFF00" d="M5 4h1v1h-1zM7 4h1v1h-1zM9 4h1v1h-1zM5 5h1v1h-1zM7 5h1v1h-1zM9 5h1v1h-1zM5 7h1v1h-1zM7 7h1v1h-1zM9 7h1v1h-1zM11 7h1v1h-1zM13 7h1v1h-1zM15 7h1v1h-1zM6 8h1v1h-1zM8 8h1v1h-1zM10 8h1v1h-1zM12 8h1v1h-1zM14 8h1v1h-1zM5 9h1v1h-1zM7 9h1v1h-1zM9 9h1v1h-1zM11 9h1v1h-1zM13 9h1v1h-1zM15 9h1v1h-1zM6 10h1v1h-1zM8 10h1v1h-1zM10 10h1v1h-1zM12 10h1v1h-1zM14 10h1v1h-1zM5 11h1v1h-1zM7 11h1v1h-1zM9 11h1v1h-1zM11 11h1v1h-1zM13 11h1v1h-1zM15 11h1v1h-1zM6 12h1v1h-1zM8 12h1v1h-1zM10 12h1v1h-1zM12 12h1v1h-1zM14 12h1v1h-1zM5 13h1v1h-1zM7 13h1v1h-1zM9 13h1v1h-1zM11 13h1v1h-1zM13 13h1v1h-1zM15 13h1v1h-1z"/><path fill="#FFFFFF" d="M6 4h1v1h-1zM8 4h1v1h-1zM4 5h1v1h-1zM6 5h1v1h-1zM8 5h1v1h-1zM10 5h1v1h-1zM4 6h12v1h-12zM4 7h1v1h-1zM4 8h1v1h-1zM4 9h1v1h-1zM4 10h1v1h-1zM4 11h1v1h-1zM4 12h1v1h-1zM4 13h1v1h-1z"/><path fill="#B4B4CC" d="M6 7h1v1h-1zM8 7h1v1h-1zM10 7h1v1h-1zM12 7h1v1h-1zM14 7h1v1h-1zM5 8h1v1h-1zM7 8h1v1h-1zM9 8h1v1h-1zM11 8h1v1h-1zM13 8h1v1h-1zM15 8h1v1h-1zM6 9h1v1h-1zM8 9h1v1h-1zM10 9h1v1h-1zM12 9h1v1h-1zM14 9h1v1h-1zM5 10h1v1h-1zM7 10h1v1h-1zM9 10h1v1h-1zM11 10h1v1h-1zM13 10h1v1h-1zM15 10h1v1h-1zM6 11h1v1h-1zM8 11h1v1h-1zM10 11h1v1h-1zM12 11h1v1h-1zM14 11h1v1h-1zM5 12h1v1h-1zM7 12h1v1h-1zM9 12h1v1h-1zM11 12h1v1h-1zM13 12h1v1h-1zM15 12h1v1h-1zM6 13h1v1h-1zM8 13h1v1h-1zM10 13h1v1h-1zM12 13h1v1h-1zM14 13h1v1h-1z"/></svg><div class="t" style="left:86px;top:262px;white-space:nowrap;">Областной бюджет</div><div class="a" style="left:55px;top:285px;width:9px;height:1px;background:repeating-linear-gradient(to right,#8D8961 0 1px,transparent 1px 2px)"></div><svg style="position:absolute;left:64px;top:276px" width="19" height="15" viewBox="0 0 19 15" shape-rendering="crispEdges"><path fill="#808080" d="M5 3h5v1h-5zM4 4h1v1h-1zM10 4h1v1h-1zM3 5h1v1h-1zM11 5h6v1h-6zM3 6h1v1h-1zM16 6h1v1h-1zM3 7h1v1h-1zM16 7h1v1h-1zM3 8h1v1h-1zM16 8h1v1h-1zM3 9h1v1h-1zM16 9h1v1h-1zM3 10h1v1h-1zM16 10h1v1h-1zM3 11h1v1h-1zM16 11h1v1h-1zM3 12h1v1h-1zM16 12h1v1h-1zM3 13h1v1h-1zM16 13h1v1h-1zM3 14h14v1h-14z"/><path fill="#FFFF00" d="M5 4h1v1h-1zM7 4h1v1h-1zM9 4h1v1h-1zM5 5h1v1h-1zM7 5h1v1h-1zM9 5h1v1h-1zM5 7h1v1h-1zM7 7h1v1h-1zM9 7h1v1h-1zM11 7h1v1h-1zM13 7h1v1h-1zM15 7h1v1h-1zM6 8h1v1h-1zM8 8h1v1h-1zM10 8h1v1h-1zM12 8h1v1h-1zM14 8h1v1h-1zM5 9h1v1h-1zM7 9h1v1h-1zM9 9h1v1h-1zM11 9h1v1h-1zM13 9h1v1h-1zM15 9h1v1h-1zM6 10h1v1h-1zM8 10h1v1h-1zM10 10h1v1h-1zM12 10h1v1h-1zM14 10h1v1h-1zM5 11h1v1h-1zM7 11h1v1h-1zM9 11h1v1h-1zM11 11h1v1h-1zM13 11h1v1h-1zM15 11h1v1h-1zM6 12h1v1h-1zM8 12h1v1h-1zM10 12h1v1h-1zM12 12h1v1h-1zM14 12h1v1h-1zM5 13h1v1h-1zM7 13h1v1h-1zM9 13h1v1h-1zM11 13h1v1h-1zM13 13h1v1h-1zM15 13h1v1h-1z"/><path fill="#FFFFFF" d="M6 4h1v1h-1zM8 4h1v1h-1zM4 5h1v1h-1zM6 5h1v1h-1zM8 5h1v1h-1zM10 5h1v1h-1zM4 6h12v1h-12zM4 7h1v1h-1zM4 8h1v1h-1zM4 9h1v1h-1zM4 10h1v1h-1zM4 11h1v1h-1zM4 12h1v1h-1zM4 13h1v1h-1z"/><path fill="#B4B4CC" d="M6 7h1v1h-1zM8 7h1v1h-1zM10 7h1v1h-1zM12 7h1v1h-1zM14 7h1v1h-1zM5 8h1v1h-1zM7 8h1v1h-1zM9 8h1v1h-1zM11 8h1v1h-1zM13 8h1v1h-1zM15 8h1v1h-1zM6 9h1v1h-1zM8 9h1v1h-1zM10 9h1v1h-1zM12 9h1v1h-1zM14 9h1v1h-1zM5 10h1v1h-1zM7 10h1v1h-1zM9 10h1v1h-1zM11 10h1v1h-1zM13 10h1v1h-1zM15 10h1v1h-1zM6 11h1v1h-1zM8 11h1v1h-1zM10 11h1v1h-1zM12 11h1v1h-1zM14 11h1v1h-1zM5 12h1v1h-1zM7 12h1v1h-1zM9 12h1v1h-1zM11 12h1v1h-1zM13 12h1v1h-1zM15 12h1v1h-1zM6 13h1v1h-1zM8 13h1v1h-1zM10 13h1v1h-1zM12 13h1v1h-1zM14 13h1v1h-1z"/></svg><div class="t" style="left:86px;top:278px;white-space:nowrap;">Федеральные трансферты</div><div class="a" style="left:55px;top:301px;width:9px;height:1px;background:repeating-linear-gradient(to right,#8D8961 0 1px,transparent 1px 2px)"></div><svg style="position:absolute;left:64px;top:292px" width="19" height="15" viewBox="0 0 19 15" shape-rendering="crispEdges"><path fill="#808080" d="M5 3h5v1h-5zM4 4h1v1h-1zM10 4h1v1h-1zM3 5h1v1h-1zM11 5h6v1h-6zM3 6h1v1h-1zM16 6h1v1h-1zM3 7h1v1h-1zM16 7h1v1h-1zM3 8h1v1h-1zM16 8h1v1h-1zM3 9h1v1h-1zM16 9h1v1h-1zM3 10h1v1h-1zM16 10h1v1h-1zM3 11h1v1h-1zM16 11h1v1h-1zM3 12h1v1h-1zM16 12h1v1h-1zM3 13h1v1h-1zM16 13h1v1h-1zM3 14h14v1h-14z"/><path fill="#FFFF00" d="M5 4h1v1h-1zM7 4h1v1h-1zM9 4h1v1h-1zM5 5h1v1h-1zM7 5h1v1h-1zM9 5h1v1h-1zM5 7h1v1h-1zM7 7h1v1h-1zM9 7h1v1h-1zM11 7h1v1h-1zM13 7h1v1h-1zM15 7h1v1h-1zM6 8h1v1h-1zM8 8h1v1h-1zM10 8h1v1h-1zM12 8h1v1h-1zM14 8h1v1h-1zM5 9h1v1h-1zM7 9h1v1h-1zM9 9h1v1h-1zM11 9h1v1h-1zM13 9h1v1h-1zM15 9h1v1h-1zM6 10h1v1h-1zM8 10h1v1h-1zM10 10h1v1h-1zM12 10h1v1h-1zM14 10h1v1h-1zM5 11h1v1h-1zM7 11h1v1h-1zM9 11h1v1h-1zM11 11h1v1h-1zM13 11h1v1h-1zM15 11h1v1h-1zM6 12h1v1h-1zM8 12h1v1h-1zM10 12h1v1h-1zM12 12h1v1h-1zM14 12h1v1h-1zM5 13h1v1h-1zM7 13h1v1h-1zM9 13h1v1h-1zM11 13h1v1h-1zM13 13h1v1h-1zM15 13h1v1h-1z"/><path fill="#FFFFFF" d="M6 4h1v1h-1zM8 4h1v1h-1zM4 5h1v1h-1zM6 5h1v1h-1zM8 5h1v1h-1zM10 5h1v1h-1zM4 6h12v1h-12zM4 7h1v1h-1zM4 8h1v1h-1zM4 9h1v1h-1zM4 10h1v1h-1zM4 11h1v1h-1zM4 12h1v1h-1zM4 13h1v1h-1z"/><path fill="#B4B4CC" d="M6 7h1v1h-1zM8 7h1v1h-1zM10 7h1v1h-1zM12 7h1v1h-1zM14 7h1v1h-1zM5 8h1v1h-1zM7 8h1v1h-1zM9 8h1v1h-1zM11 8h1v1h-1zM13 8h1v1h-1zM15 8h1v1h-1zM6 9h1v1h-1zM8 9h1v1h-1zM10 9h1v1h-1zM12 9h1v1h-1zM14 9h1v1h-1zM5 10h1v1h-1zM7 10h1v1h-1zM9 10h1v1h-1zM11 10h1v1h-1zM13 10h1v1h-1zM15 10h1v1h-1zM6 11h1v1h-1zM8 11h1v1h-1zM10 11h1v1h-1zM12 11h1v1h-1zM14 11h1v1h-1zM5 12h1v1h-1zM7 12h1v1h-1zM9 12h1v1h-1zM11 12h1v1h-1zM13 12h1v1h-1zM15 12h1v1h-1zM6 13h1v1h-1zM8 13h1v1h-1zM10 13h1v1h-1zM12 13h1v1h-1zM14 13h1v1h-1z"/></svg><div class="t" style="left:86px;top:294px;white-space:nowrap;">Параметры ФЭР</div><div class="a" style="left:55px;top:317px;width:9px;height:1px;background:repeating-linear-gradient(to right,#8D8961 0 1px,transparent 1px 2px)"></div><svg style="position:absolute;left:64px;top:308px" width="19" height="15" viewBox="0 0 19 15" shape-rendering="crispEdges"><path fill="#808080" d="M5 3h5v1h-5zM4 4h1v1h-1zM10 4h1v1h-1zM3 5h1v1h-1zM11 5h6v1h-6zM3 6h1v1h-1zM16 6h1v1h-1zM3 7h1v1h-1zM16 7h1v1h-1zM3 8h1v1h-1zM16 8h1v1h-1zM3 9h1v1h-1zM16 9h1v1h-1zM3 10h1v1h-1zM16 10h1v1h-1zM3 11h1v1h-1zM16 11h1v1h-1zM3 12h1v1h-1zM16 12h1v1h-1zM3 13h1v1h-1zM16 13h1v1h-1zM3 14h14v1h-14z"/><path fill="#FFFF00" d="M5 4h1v1h-1zM7 4h1v1h-1zM9 4h1v1h-1zM5 5h1v1h-1zM7 5h1v1h-1zM9 5h1v1h-1zM5 7h1v1h-1zM7 7h1v1h-1zM9 7h1v1h-1zM11 7h1v1h-1zM13 7h1v1h-1zM15 7h1v1h-1zM6 8h1v1h-1zM8 8h1v1h-1zM10 8h1v1h-1zM12 8h1v1h-1zM14 8h1v1h-1zM5 9h1v1h-1zM7 9h1v1h-1zM9 9h1v1h-1zM11 9h1v1h-1zM13 9h1v1h-1zM15 9h1v1h-1zM6 10h1v1h-1zM8 10h1v1h-1zM10 10h1v1h-1zM12 10h1v1h-1zM14 10h1v1h-1zM5 11h1v1h-1zM7 11h1v1h-1zM9 11h1v1h-1zM11 11h1v1h-1zM13 11h1v1h-1zM15 11h1v1h-1zM6 12h1v1h-1zM8 12h1v1h-1zM10 12h1v1h-1zM12 12h1v1h-1zM14 12h1v1h-1zM5 13h1v1h-1zM7 13h1v1h-1zM9 13h1v1h-1zM11 13h1v1h-1zM13 13h1v1h-1zM15 13h1v1h-1z"/><path fill="#FFFFFF" d="M6 4h1v1h-1zM8 4h1v1h-1zM4 5h1v1h-1zM6 5h1v1h-1zM8 5h1v1h-1zM10 5h1v1h-1zM4 6h12v1h-12zM4 7h1v1h-1zM4 8h1v1h-1zM4 9h1v1h-1zM4 10h1v1h-1zM4 11h1v1h-1zM4 12h1v1h-1zM4 13h1v1h-1z"/><path fill="#B4B4CC" d="M6 7h1v1h-1zM8 7h1v1h-1zM10 7h1v1h-1zM12 7h1v1h-1zM14 7h1v1h-1zM5 8h1v1h-1zM7 8h1v1h-1zM9 8h1v1h-1zM11 8h1v1h-1zM13 8h1v1h-1zM15 8h1v1h-1zM6 9h1v1h-1zM8 9h1v1h-1zM10 9h1v1h-1zM12 9h1v1h-1zM14 9h1v1h-1zM5 10h1v1h-1zM7 10h1v1h-1zM9 10h1v1h-1zM11 10h1v1h-1zM13 10h1v1h-1zM15 10h1v1h-1zM6 11h1v1h-1zM8 11h1v1h-1zM10 11h1v1h-1zM12 11h1v1h-1zM14 11h1v1h-1zM5 12h1v1h-1zM7 12h1v1h-1zM9 12h1v1h-1zM11 12h1v1h-1zM13 12h1v1h-1zM15 12h1v1h-1zM6 13h1v1h-1zM8 13h1v1h-1zM10 13h1v1h-1zM12 13h1v1h-1zM14 13h1v1h-1z"/></svg><div class="t" style="left:86px;top:310px;white-space:nowrap;">Пропорции налогов</div><div class="a" style="left:55px;top:333px;width:9px;height:1px;background:repeating-linear-gradient(to right,#8D8961 0 1px,transparent 1px 2px)"></div><svg style="position:absolute;left:64px;top:324px" width="19" height="15" viewBox="0 0 19 15" shape-rendering="crispEdges"><path fill="#808080" d="M5 3h5v1h-5zM4 4h1v1h-1zM10 4h1v1h-1zM3 5h1v1h-1zM11 5h6v1h-6zM3 6h1v1h-1zM16 6h1v1h-1zM3 7h1v1h-1zM16 7h1v1h-1zM3 8h1v1h-1zM16 8h1v1h-1zM3 9h1v1h-1zM16 9h1v1h-1zM3 10h1v1h-1zM16 10h1v1h-1zM3 11h1v1h-1zM16 11h1v1h-1zM3 12h1v1h-1zM16 12h1v1h-1zM3 13h1v1h-1zM16 13h1v1h-1zM3 14h14v1h-14z"/><path fill="#FFFF00" d="M5 4h1v1h-1zM7 4h1v1h-1zM9 4h1v1h-1zM5 5h1v1h-1zM7 5h1v1h-1zM9 5h1v1h-1zM5 7h1v1h-1zM7 7h1v1h-1zM9 7h1v1h-1zM11 7h1v1h-1zM13 7h1v1h-1zM15 7h1v1h-1zM6 8h1v1h-1zM8 8h1v1h-1zM10 8h1v1h-1zM12 8h1v1h-1zM14 8h1v1h-1zM5 9h1v1h-1zM7 9h1v1h-1zM9 9h1v1h-1zM11 9h1v1h-1zM13 9h1v1h-1zM15 9h1v1h-1zM6 10h1v1h-1zM8 10h1v1h-1zM10 10h1v1h-1zM12 10h1v1h-1zM14 10h1v1h-1zM5 11h1v1h-1zM7 11h1v1h-1zM9 11h1v1h-1zM11 11h1v1h-1zM13 11h1v1h-1zM15 11h1v1h-1zM6 12h1v1h-1zM8 12h1v1h-1zM10 12h1v1h-1zM12 12h1v1h-1zM14 12h1v1h-1zM5 13h1v1h-1zM7 13h1v1h-1zM9 13h1v1h-1zM11 13h1v1h-1zM13 13h1v1h-1zM15 13h1v1h-1z"/><path fill="#FFFFFF" d="M6 4h1v1h-1zM8 4h1v1h-1zM4 5h1v1h-1zM6 5h1v1h-1zM8 5h1v1h-1zM10 5h1v1h-1zM4 6h12v1h-12zM4 7h1v1h-1zM4 8h1v1h-1zM4 9h1v1h-1zM4 10h1v1h-1zM4 11h1v1h-1zM4 12h1v1h-1zM4 13h1v1h-1z"/><path fill="#B4B4CC" d="M6 7h1v1h-1zM8 7h1v1h-1zM10 7h1v1h-1zM12 7h1v1h-1zM14 7h1v1h-1zM5 8h1v1h-1zM7 8h1v1h-1zM9 8h1v1h-1zM11 8h1v1h-1zM13 8h1v1h-1zM15 8h1v1h-1zM6 9h1v1h-1zM8 9h1v1h-1zM10 9h1v1h-1zM12 9h1v1h-1zM14 9h1v1h-1zM5 10h1v1h-1zM7 10h1v1h-1zM9 10h1v1h-1zM11 10h1v1h-1zM13 10h1v1h-1zM15 10h1v1h-1zM6 11h1v1h-1zM8 11h1v1h-1zM10 11h1v1h-1zM12 11h1v1h-1zM14 11h1v1h-1zM5 12h1v1h-1zM7 12h1v1h-1zM9 12h1v1h-1zM11 12h1v1h-1zM13 12h1v1h-1zM15 12h1v1h-1zM6 13h1v1h-1zM8 13h1v1h-1zM10 13h1v1h-1zM12 13h1v1h-1zM14 13h1v1h-1z"/></svg><div class="t" style="left:86px;top:326px;white-space:nowrap;">Другие</div><div class="a" style="left:40px;top:349px;width:5px;height:1px;background:repeating-linear-gradient(to right,#8D8961 0 1px,transparent 1px 2px)"></div><div class="a" style="left:31px;top:345px;width:9px;height:9px;background:#FFFFFF;box-sizing:border-box;border:1px solid #8D8961;"></div><div class="a" style="left:33px;top:349px;width:5px;height:1px;background:#000000;"></div><div class="a" style="left:35px;top:347px;width:1px;height:5px;background:#000000;"></div><svg style="position:absolute;left:46px;top:341px" width="16" height="16" viewBox="0 0 16 16" shape-rendering="crispEdges"><path fill="#000000" d="M0 1h8v1h-8zM0 2h1v1h-1zM6 2h1v1h-1zM8 2h1v1h-1zM0 3h1v1h-1zM2 3h2v1h-2zM6 3h1v1h-1zM9 3h1v1h-1zM0 4h1v1h-1zM6 4h5v1h-5zM0 5h1v1h-1zM2 5h2v1h-2zM10 5h1v1h-1zM0 6h1v1h-1zM8 6h1v1h-1zM10 6h1v1h-1zM0 7h1v1h-1zM2 7h2v1h-2zM8 7h1v1h-1zM11 7h1v1h-1zM0 8h1v1h-1zM12 8h1v1h-1zM0 9h1v1h-1zM2 9h2v1h-2zM13 9h1v1h-1zM0 10h1v1h-1zM14 10h1v1h-1zM0 11h6v1h-6zM13 11h1v1h-1zM12 12h1v1h-1zM11 13h1v1h-1zM10 14h1v1h-1zM9 15h1v1h-1z"/><path fill="#FFFFFF" d="M1 2h5v1h-5zM7 2h1v1h-1zM1 3h1v1h-1zM4 3h2v1h-2zM7 3h2v1h-2zM1 4h5v1h-5zM1 5h1v1h-1zM4 5h6v1h-6zM1 6h7v1h-7zM1 7h1v1h-1zM4 7h4v1h-4zM1 8h5v1h-5zM1 9h1v1h-1zM4 9h2v1h-2zM1 10h5v1h-5z"/><path fill="#FF0000" d="M9 6h1v1h-1zM9 7h2v1h-2zM6 8h6v1h-6zM6 9h7v1h-7zM6 10h8v1h-8zM6 11h7v1h-7zM6 12h6v1h-6zM9 13h2v1h-2zM9 14h1v1h-1z"/></svg><div class="t" style="left:67px;top:342px;white-space:nowrap;">Результаты моделирования</div></div></div>
<div class="a" style="left:8px;top:475px;width:188px;height:13px;background-color:#DEDDCE"></div>
<div class="a" style="left:8px;top:475px;width:13px;height:13px;background:#BFBFA0;"></div><div class="a" style="left:8px;top:475px;width:12px;height:1px;background:#BFBFA0;"></div><div class="a" style="left:8px;top:475px;width:1px;height:12px;background:#BFBFA0;"></div><div class="a" style="left:9px;top:476px;width:10px;height:1px;background:#E1E0D2;"></div><div class="a" style="left:9px;top:476px;width:1px;height:10px;background:#E1E0D2;"></div><div class="a" style="left:9px;top:486px;width:11px;height:1px;background:#8D8961;"></div><div class="a" style="left:19px;top:476px;width:1px;height:11px;background:#8D8961;"></div><div class="a" style="left:8px;top:487px;width:13px;height:1px;background:#000000;"></div><div class="a" style="left:20px;top:475px;width:1px;height:13px;background:#000000;"></div>
<svg style="position:absolute;left:12px;top:479px" width="3" height="5" viewBox="0 0 3 5" shape-rendering="crispEdges"><path fill="#000000" d="M2 0h1v1h-1zM1 1h2v1h-2zM0 2h3v1h-3zM1 3h2v1h-2zM2 4h1v1h-1z"/></svg>
<div class="a" style="left:21px;top:475px;width:132px;height:13px;background:#BFBFA0;"></div><div class="a" style="left:21px;top:475px;width:131px;height:1px;background:#BFBFA0;"></div><div class="a" style="left:21px;top:475px;width:1px;height:12px;background:#BFBFA0;"></div><div class="a" style="left:22px;top:476px;width:129px;height:1px;background:#E1E0D2;"></div><div class="a" style="left:22px;top:476px;width:1px;height:10px;background:#E1E0D2;"></div><div class="a" style="left:22px;top:486px;width:130px;height:1px;background:#8D8961;"></div><div class="a" style="left:151px;top:476px;width:1px;height:11px;background:#8D8961;"></div><div class="a" style="left:21px;top:487px;width:132px;height:1px;background:#000000;"></div><div class="a" style="left:152px;top:475px;width:1px;height:13px;background:#000000;"></div>
<div class="a" style="left:183px;top:475px;width:13px;height:13px;background:#BFBFA0;"></div><div class="a" style="left:183px;top:475px;width:12px;height:1px;background:#BFBFA0;"></div><div class="a" style="left:183px;top:475px;width:1px;height:12px;background:#BFBFA0;"></div><div class="a" style="left:184px;top:476px;width:10px;height:1px;background:#E1E0D2;"></div><div class="a" style="left:184px;top:476px;width:1px;height:10px;background:#E1E0D2;"></div><div class="a" style="left:184px;top:486px;width:11px;height:1px;background:#8D8961;"></div><div class="a" style="left:194px;top:476px;width:1px;height:11px;background:#8D8961;"></div><div class="a" style="left:183px;top:487px;width:13px;height:1px;background:#000000;"></div><div class="a" style="left:195px;top:475px;width:1px;height:13px;background:#000000;"></div>
<svg style="position:absolute;left:188px;top:479px" width="3" height="5" viewBox="0 0 3 5" shape-rendering="crispEdges"><path fill="#000000" d="M0 0h1v1h-1zM0 1h2v1h-2zM0 2h3v1h-3zM0 3h2v1h-2zM0 4h1v1h-1z"/></svg>
<svg style="position:absolute;left:14px;top:44px" width="20" height="19" viewBox="0 0 20 19" shape-rendering="crispEdges"><path fill="#FFFF00" d="M2 3h1v1h-1zM9 3h1v1h-1zM17 3h1v1h-1zM3 4h2v1h-2zM9 4h1v1h-1zM16 4h1v1h-1zM15 5h1v1h-1zM14 6h1v1h-1zM14 7h1v1h-1zM2 10h3v1h-3zM15 10h3v1h-3zM3 16h2v1h-2zM15 16h2v1h-2zM3 17h1v1h-1zM9 17h2v1h-2zM16 17h2v1h-2zM9 18h2v1h-2zM17 18h1v1h-1z"/><path fill="#000000" d="M5 5h7v1h-7zM5 6h1v1h-1zM11 6h2v1h-2zM5 7h1v1h-1zM11 7h1v1h-1zM13 7h1v1h-1zM5 8h1v1h-1zM11 8h4v1h-4zM5 9h1v1h-1zM14 9h1v1h-1zM5 10h1v1h-1zM14 10h1v1h-1zM5 11h1v1h-1zM14 11h1v1h-1zM5 12h1v1h-1zM14 12h1v1h-1zM5 13h1v1h-1zM14 13h1v1h-1zM5 14h1v1h-1zM14 14h1v1h-1zM5 15h1v1h-1zM14 15h1v1h-1zM5 16h10v1h-10z"/><path fill="#FFF0FF" d="M6 6h5v1h-5zM6 7h5v1h-5zM12 7h1v1h-1zM6 8h5v1h-5zM6 9h8v1h-8zM6 10h8v1h-8zM6 11h8v1h-8zM6 12h8v1h-8zM6 13h8v1h-8zM6 14h8v1h-8zM6 15h8v1h-8z"/></svg>
<svg style="position:absolute;left:37px;top:44px" width="20" height="18" viewBox="0 0 20 18" shape-rendering="crispEdges"><path fill="#000000" d="M8 4h7v1h-7zM8 5h1v1h-1zM14 5h2v1h-2zM8 6h1v1h-1zM14 6h1v1h-1zM16 6h1v1h-1zM8 7h1v1h-1zM10 7h2v1h-2zM14 7h4v1h-4zM3 8h4v1h-4zM8 8h1v1h-1zM17 8h1v1h-1zM2 9h1v1h-1zM6 9h3v1h-3zM10 9h6v1h-6zM17 9h1v1h-1zM2 10h1v1h-1zM8 10h1v1h-1zM17 10h1v1h-1zM2 11h1v1h-1zM7 11h2v1h-2zM10 11h6v1h-6zM17 11h1v1h-1zM2 12h1v1h-1zM7 12h1v1h-1zM17 12h1v1h-1zM2 13h1v1h-1zM5 13h9v1h-9zM17 13h1v1h-1zM2 14h1v1h-1zM4 14h1v1h-1zM14 14h1v1h-1zM17 14h1v1h-1zM2 15h2v1h-2zM13 15h1v1h-1zM17 15h1v1h-1zM2 16h1v1h-1zM12 16h6v1h-6zM3 17h10v1h-10z"/><path fill="#FFFFFF" d="M9 5h5v1h-5zM9 6h5v1h-5zM15 6h1v1h-1zM9 7h1v1h-1zM12 7h2v1h-2zM9 8h8v1h-8zM4 9h1v1h-1zM9 9h1v1h-1zM16 9h1v1h-1zM3 10h1v1h-1zM5 10h1v1h-1zM9 10h8v1h-8zM4 11h1v1h-1zM6 11h1v1h-1zM9 11h1v1h-1zM16 11h1v1h-1zM3 12h1v1h-1zM5 12h1v1h-1zM8 12h9v1h-9zM4 13h1v1h-1zM14 13h3v1h-3zM3 14h1v1h-1zM6 14h1v1h-1zM8 14h1v1h-1zM10 14h1v1h-1zM12 14h1v1h-1zM15 14h2v1h-2zM5 15h1v1h-1zM7 15h1v1h-1zM9 15h1v1h-1zM11 15h1v1h-1zM14 15h3v1h-3zM4 16h1v1h-1zM6 16h1v1h-1zM8 16h1v1h-1zM10 16h1v1h-1z"/><path fill="#FFFF00" d="M3 9h1v1h-1zM5 9h1v1h-1zM4 10h1v1h-1zM6 10h1v1h-1zM3 11h1v1h-1zM5 11h1v1h-1zM4 12h1v1h-1zM6 12h1v1h-1zM3 13h1v1h-1zM5 14h1v1h-1zM7 14h1v1h-1zM9 14h1v1h-1zM11 14h1v1h-1zM13 14h1v1h-1zM4 15h1v1h-1zM6 15h1v1h-1zM8 15h1v1h-1zM10 15h1v1h-1zM12 15h1v1h-1zM3 16h1v1h-1zM5 16h1v1h-1zM7 16h1v1h-1zM9 16h1v1h-1zM11 16h1v1h-1z"/><path fill="#0000FF" d="M7 10h1v1h-1z"/></svg>
<svg style="position:absolute;left:60px;top:44px" width="20" height="19" viewBox="0 0 20 19" shape-rendering="crispEdges"><path fill="#000000" d="M2 3h7v1h-7zM2 4h1v1h-1zM8 4h2v1h-2zM2 5h1v1h-1zM4 5h2v1h-2zM8 5h1v1h-1zM10 5h1v1h-1zM2 6h1v1h-1zM8 6h4v1h-4zM2 7h1v1h-1zM4 7h2v1h-2zM11 7h1v1h-1zM2 8h1v1h-1zM11 8h1v1h-1zM2 9h1v1h-1zM4 9h3v1h-3zM8 9h2v1h-2zM11 9h1v1h-1zM2 10h1v1h-1zM11 10h1v1h-1zM2 11h1v1h-1zM4 11h2v1h-2zM7 11h3v1h-3zM11 11h1v1h-1zM18 11h1v1h-1zM2 12h1v1h-1zM10 12h2v1h-2zM18 12h1v1h-1zM2 13h1v1h-1zM10 13h2v1h-2zM18 13h1v1h-1zM2 14h17v1h-17zM10 15h3v1h-3zM16 15h3v1h-3zM10 16h3v1h-3zM14 16h1v1h-1zM16 16h3v1h-3zM10 17h3v1h-3zM14 17h1v1h-1zM16 17h3v1h-3zM10 18h9v1h-9z"/><path fill="#FFFFFF" d="M3 4h5v1h-5zM3 5h1v1h-1zM6 5h2v1h-2zM9 5h1v1h-1zM3 6h5v1h-5zM3 7h1v1h-1zM6 7h5v1h-5zM3 8h8v1h-8zM3 9h1v1h-1zM7 9h1v1h-1zM10 9h1v1h-1zM3 10h8v1h-8zM3 11h1v1h-1zM6 11h1v1h-1zM10 11h1v1h-1zM3 12h7v1h-7zM12 12h6v1h-6zM3 13h7v1h-7zM12 13h6v1h-6z"/><path fill="#FF0000" d="M11 4h5v1h-5zM11 5h6v1h-6zM14 6h3v1h-3zM14 7h3v1h-3zM13 8h6v1h-6zM14 9h4v1h-4zM15 10h2v1h-2z"/><path fill="#0000FF" d="M12 11h6v1h-6z"/><path fill="#808080" d="M13 15h3v1h-3zM13 16h1v1h-1zM15 16h1v1h-1zM13 17h1v1h-1zM15 17h1v1h-1z"/></svg>
<svg style="position:absolute;left:83px;top:44px" width="20" height="19" viewBox="0 0 20 19" shape-rendering="crispEdges"><path fill="#8D8961" d="M3 3h13v1h-13zM2 4h15v1h-15zM2 5h15v1h-15zM2 6h15v1h-15zM2 7h15v1h-15zM2 8h15v1h-15zM2 9h15v1h-15zM2 10h15v1h-15zM2 11h15v1h-15zM2 12h15v1h-15zM2 13h15v1h-15zM2 14h15v1h-15zM2 15h15v1h-15zM2 16h15v1h-15zM3 17h13v1h-13z"/><path fill="#E1E0D2" d="M17 4h1v1h-1zM17 5h1v1h-1zM17 6h1v1h-1zM17 7h1v1h-1zM17 8h1v1h-1zM17 9h1v1h-1zM17 10h1v1h-1zM17 11h1v1h-1zM17 12h1v1h-1zM17 13h1v1h-1zM17 14h1v1h-1zM17 15h1v1h-1zM17 16h1v1h-1zM16 17h2v1h-2zM4 18h13v1h-13z"/></svg>
<svg style="position:absolute;left:114px;top:44px" width="20" height="18" viewBox="0 0 20 18" shape-rendering="crispEdges"><path fill="#000000" d="M4 3h12v1h-12zM4 4h1v1h-1zM15 4h1v1h-1zM4 5h1v1h-1zM15 5h1v1h-1zM4 6h1v1h-1zM15 6h1v1h-1zM11 7h1v1h-1zM15 7h1v1h-1zM11 8h1v1h-1zM15 8h1v1h-1zM11 9h1v1h-1zM15 9h1v1h-1zM4 10h2v1h-2zM9 10h2v1h-2zM15 10h1v1h-1zM4 11h1v1h-1zM15 11h1v1h-1zM4 12h1v1h-1zM6 12h3v1h-3zM15 12h1v1h-1zM4 13h1v1h-1zM15 13h1v1h-1zM4 14h1v1h-1zM12 14h4v1h-4zM4 15h1v1h-1zM12 15h1v1h-1zM14 15h1v1h-1zM4 16h1v1h-1zM12 16h2v1h-2zM4 17h9v1h-9z"/><path fill="#FFF0FF" d="M5 4h10v1h-10zM5 5h1v1h-1zM9 5h6v1h-6zM5 6h1v1h-1zM9 6h6v1h-6zM12 7h3v1h-3zM14 8h1v1h-1zM12 9h1v1h-1zM14 9h1v1h-1zM11 10h1v1h-1zM14 10h1v1h-1zM5 11h1v1h-1zM9 11h1v1h-1zM12 11h3v1h-3zM5 12h1v1h-1zM9 12h6v1h-6zM5 13h10v1h-10zM5 14h2v1h-2zM8 14h4v1h-4zM5 15h7v1h-7zM13 15h1v1h-1zM5 16h7v1h-7z"/><path fill="#00FF00" d="M6 5h3v1h-3zM6 6h3v1h-3zM3 7h8v1h-8zM3 8h8v1h-8zM3 9h8v1h-8zM6 10h3v1h-3zM6 11h3v1h-3zM7 14h1v1h-1z"/><path fill="#C0C0C0" d="M12 8h2v1h-2zM13 9h1v1h-1zM12 10h2v1h-2zM10 11h2v1h-2z"/></svg>
<svg style="position:absolute;left:137px;top:44px" width="20" height="18" viewBox="0 0 20 18" shape-rendering="crispEdges"><path fill="#000000" d="M4 3h12v1h-12zM4 4h1v1h-1zM15 4h1v1h-1zM4 5h1v1h-1zM15 5h1v1h-1zM11 6h1v1h-1zM15 6h1v1h-1zM11 7h1v1h-1zM15 7h1v1h-1zM11 8h1v1h-1zM15 8h1v1h-1zM11 9h1v1h-1zM15 9h1v1h-1zM3 10h8v1h-8zM15 10h1v1h-1zM4 11h1v1h-1zM15 11h1v1h-1zM4 12h1v1h-1zM15 12h1v1h-1zM4 13h1v1h-1zM15 13h1v1h-1zM4 14h1v1h-1zM12 14h4v1h-4zM4 15h1v1h-1zM12 15h1v1h-1zM14 15h1v1h-1zM4 16h1v1h-1zM12 16h2v1h-2zM4 17h9v1h-9z"/><path fill="#FFF0FF" d="M5 4h10v1h-10zM5 5h10v1h-10zM12 6h3v1h-3zM14 7h1v1h-1zM12 8h1v1h-1zM14 8h1v1h-1zM12 9h1v1h-1zM14 9h1v1h-1zM11 10h1v1h-1zM14 10h1v1h-1zM5 11h5v1h-5zM12 11h3v1h-3zM5 12h10v1h-10zM5 13h10v1h-10zM5 14h2v1h-2zM8 14h4v1h-4zM5 15h7v1h-7zM13 15h1v1h-1zM5 16h7v1h-7z"/><path fill="#FF0000" d="M2 6h9v1h-9zM2 7h9v1h-9zM2 8h9v1h-9zM2 9h9v1h-9z"/><path fill="#C0C0C0" d="M12 7h2v1h-2zM13 8h1v1h-1zM13 9h1v1h-1zM12 10h2v1h-2zM10 11h2v1h-2z"/><path fill="#00FF00" d="M7 14h1v1h-1z"/></svg>
<svg style="position:absolute;left:160px;top:44px" width="20" height="19" viewBox="0 0 20 19" shape-rendering="crispEdges"><path fill="#000000" d="M4 3h1v1h-1zM8 3h7v1h-7zM4 4h1v1h-1zM8 4h1v1h-1zM14 4h2v1h-2zM8 5h1v1h-1zM14 5h1v1h-1zM16 5h1v1h-1zM8 6h1v1h-1zM11 6h2v1h-2zM14 6h4v1h-4zM17 7h1v1h-1zM2 8h3v1h-3zM17 8h1v1h-1zM1 9h1v1h-1zM3 9h1v1h-1zM5 9h3v1h-3zM13 9h2v1h-2zM17 9h1v1h-1zM1 10h1v1h-1zM8 10h2v1h-2zM17 10h1v1h-1zM1 11h1v1h-1zM10 11h1v1h-1zM17 11h1v1h-1zM1 12h1v1h-1zM7 12h5v1h-5zM17 12h1v1h-1zM1 13h1v1h-1zM12 13h1v1h-1zM14 13h1v1h-1zM17 13h1v1h-1zM1 14h1v1h-1zM8 14h4v1h-4zM15 14h1v1h-1zM17 14h1v1h-1zM1 15h1v1h-1zM3 15h1v1h-1zM10 15h1v1h-1zM17 15h1v1h-1zM2 16h8v1h-8zM12 16h1v1h-1zM15 16h3v1h-3zM8 17h1v1h-1zM17 17h1v1h-1zM8 18h10v1h-10z"/><path fill="#FF0000" d="M5 4h1v1h-1zM5 5h1v1h-1z"/><path fill="#FFFFFF" d="M9 4h5v1h-5zM9 5h5v1h-5zM15 5h1v1h-1zM9 6h2v1h-2zM13 6h1v1h-1zM9 7h8v1h-8zM10 8h7v1h-7zM8 9h1v1h-1zM11 9h2v1h-2zM15 9h2v1h-2zM4 10h1v1h-1zM6 10h1v1h-1zM12 10h5v1h-5zM3 11h1v1h-1zM5 11h1v1h-1zM7 11h1v1h-1zM9 11h1v1h-1zM13 11h4v1h-4zM4 12h1v1h-1zM6 12h1v1h-1zM14 12h3v1h-3zM3 13h1v1h-1zM5 13h1v1h-1zM7 13h1v1h-1zM9 13h1v1h-1zM11 13h1v1h-1zM13 13h1v1h-1zM15 13h2v1h-2zM4 14h1v1h-1zM6 14h1v1h-1zM12 14h3v1h-3zM16 14h1v1h-1zM4 15h1v1h-1zM6 15h1v1h-1zM8 15h1v1h-1zM11 15h6v1h-6zM10 16h2v1h-2zM13 16h2v1h-2zM9 17h8v1h-8z"/><path fill="#FFFF00" d="M6 5h1v1h-1zM6 6h2v1h-2zM7 7h2v1h-2zM8 8h2v1h-2zM4 9h1v1h-1zM9 9h2v1h-2zM3 10h1v1h-1zM5 10h1v1h-1zM7 10h1v1h-1zM10 10h2v1h-2zM4 11h1v1h-1zM6 11h1v1h-1zM8 11h1v1h-1zM11 11h2v1h-2zM3 12h1v1h-1zM5 12h1v1h-1zM12 12h2v1h-2zM4 13h1v1h-1zM6 13h1v1h-1zM8 13h1v1h-1zM10 13h1v1h-1zM3 14h1v1h-1zM5 14h1v1h-1zM7 14h1v1h-1zM5 15h1v1h-1zM7 15h1v1h-1zM9 15h1v1h-1z"/><path fill="#00FFFF" d="M2 9h1v1h-1zM2 10h1v1h-1zM2 11h1v1h-1zM2 12h1v1h-1zM2 13h1v1h-1zM2 14h1v1h-1zM2 15h1v1h-1z"/></svg>
<svg style="position:absolute;left:183px;top:44px" width="20" height="19" viewBox="0 0 20 19" shape-rendering="crispEdges"><path fill="#8D8961" d="M9 3h1v1h-1zM9 4h1v1h-1zM9 5h1v1h-1zM9 6h1v1h-1zM7 7h1v1h-1zM9 7h1v1h-1zM12 7h1v1h-1zM8 8h2v1h-2zM11 8h1v1h-1zM9 9h1v1h-1zM2 10h16v1h-16zM2 11h16v1h-16zM9 12h1v1h-1zM8 13h2v1h-2zM11 13h1v1h-1zM7 14h1v1h-1zM9 14h1v1h-1zM13 14h1v1h-1zM9 15h1v1h-1zM9 16h1v1h-1zM9 17h1v1h-1zM9 18h1v1h-1z"/><path fill="#E1E0D2" d="M10 4h1v1h-1zM10 5h1v1h-1zM10 6h1v1h-1zM10 7h1v1h-1zM10 8h1v1h-1zM10 9h1v1h-1zM18 11h1v1h-1zM3 12h6v1h-6zM10 12h8v1h-8zM10 13h1v1h-1zM10 14h2v1h-2zM10 15h1v1h-1zM10 16h1v1h-1zM10 17h1v1h-1zM10 18h1v1h-1z"/></svg>
<svg style="position:absolute;left:214px;top:44px" width="20" height="18" viewBox="0 0 20 18" shape-rendering="crispEdges"><path fill="#000000" d="M5 3h9v1h-9zM5 4h1v1h-1zM13 4h1v1h-1zM5 5h1v1h-1zM7 5h5v1h-5zM13 5h1v1h-1zM5 6h1v1h-1zM7 6h1v1h-1zM10 6h1v1h-1zM13 6h1v1h-1zM5 7h1v1h-1zM7 7h1v1h-1zM13 7h1v1h-1zM5 8h1v1h-1zM7 8h5v1h-5zM13 8h1v1h-1zM5 9h1v1h-1zM13 9h1v1h-1zM5 10h9v1h-9zM3 11h14v1h-14zM2 12h1v1h-1zM16 12h1v1h-1zM2 13h1v1h-1zM8 13h10v1h-10zM2 14h1v1h-1zM6 14h2v1h-2zM17 14h1v1h-1zM2 15h16v1h-16zM3 16h1v1h-1zM5 16h1v1h-1zM7 16h1v1h-1zM9 16h1v1h-1zM11 16h1v1h-1zM13 16h1v1h-1zM15 16h2v1h-2zM3 17h14v1h-14z"/><path fill="#FFFFFF" d="M6 4h7v1h-7zM6 5h1v1h-1zM12 5h1v1h-1zM6 6h1v1h-1zM12 6h1v1h-1zM6 7h1v1h-1zM12 7h1v1h-1zM6 8h1v1h-1zM12 8h1v1h-1zM6 9h7v1h-7zM3 12h13v1h-13zM3 13h1v1h-1zM5 13h3v1h-3zM3 14h3v1h-3zM8 14h9v1h-9zM4 16h1v1h-1zM6 16h1v1h-1zM8 16h1v1h-1zM10 16h1v1h-1zM12 16h1v1h-1zM14 16h1v1h-1z"/><path fill="#FF00FF" d="M8 6h1v1h-1z"/><path fill="#00FF00" d="M9 6h1v1h-1zM8 7h3v1h-3z"/><path fill="#00FFFF" d="M11 6h1v1h-1zM11 7h1v1h-1z"/><path fill="#FF0000" d="M4 13h1v1h-1z"/></svg>
<svg style="position:absolute;left:240px;top:55px" width="5" height="3" viewBox="0 0 5 3" shape-rendering="crispEdges"><path fill="#000000" d="M0 0h5v1h-5zM1 1h3v1h-3zM2 2h1v1h-1z"/></svg>
<svg style="position:absolute;left:250px;top:44px" width="20" height="17" viewBox="0 0 20 17" shape-rendering="crispEdges"><path fill="#8D8961" d="M3 4h3v1h-3zM14 4h3v1h-3zM3 5h4v1h-4zM13 5h3v1h-3zM4 6h4v1h-4zM12 6h3v1h-3zM5 7h4v1h-4zM11 7h3v1h-3zM6 8h7v1h-7zM7 9h5v1h-5zM7 10h5v1h-5zM6 11h4v1h-4zM11 11h3v1h-3zM5 12h4v1h-4zM11 12h4v1h-4zM4 13h4v1h-4zM12 13h4v1h-4zM4 14h3v1h-3zM13 14h3v1h-3zM14 15h2v1h-2z"/><path fill="#E1E0D2" d="M16 5h1v1h-1zM15 6h1v1h-1zM14 7h1v1h-1zM13 8h1v1h-1zM12 9h1v1h-1zM10 11h1v1h-1zM9 12h1v1h-1zM8 13h1v1h-1zM7 14h1v1h-1zM5 15h2v1h-2zM16 15h1v1h-1zM15 16h2v1h-2z"/></svg>
<svg style="position:absolute;left:281px;top:44px" width="20" height="18" viewBox="0 0 20 18" shape-rendering="crispEdges"><path fill="#000000" d="M5 3h7v1h-7zM5 4h1v1h-1zM11 4h2v1h-2zM5 5h1v1h-1zM7 5h1v1h-1zM11 5h1v1h-1zM13 5h1v1h-1zM5 6h1v1h-1zM11 6h4v1h-4zM5 7h1v1h-1zM7 7h2v1h-2zM14 7h1v1h-1zM5 8h1v1h-1zM14 8h1v1h-1zM5 9h1v1h-1zM7 9h4v1h-4zM12 9h1v1h-1zM14 9h1v1h-1zM5 10h1v1h-1zM14 10h1v1h-1zM2 11h16v1h-16zM2 12h1v1h-1zM17 12h1v1h-1zM2 13h1v1h-1zM17 13h1v1h-1zM2 14h16v1h-16zM2 15h1v1h-1zM17 15h1v1h-1zM2 16h1v1h-1zM17 16h1v1h-1zM3 17h14v1h-14z"/><path fill="#FFFFFF" d="M6 4h5v1h-5zM6 5h1v1h-1zM8 5h3v1h-3zM12 5h1v1h-1zM6 6h5v1h-5zM6 7h1v1h-1zM9 7h5v1h-5zM6 8h8v1h-8zM6 9h1v1h-1zM11 9h1v1h-1zM13 9h1v1h-1zM6 10h8v1h-8zM3 12h1v1h-1zM5 12h1v1h-1zM7 12h1v1h-1zM9 12h1v1h-1zM11 12h1v1h-1zM13 12h1v1h-1zM16 12h1v1h-1zM4 13h1v1h-1zM6 13h1v1h-1zM8 13h1v1h-1zM10 13h1v1h-1zM12 13h1v1h-1zM14 13h1v1h-1z"/><path fill="#C0C0C0" d="M4 12h1v1h-1zM6 12h1v1h-1zM8 12h1v1h-1zM10 12h1v1h-1zM12 12h1v1h-1zM14 12h1v1h-1zM3 13h1v1h-1zM5 13h1v1h-1zM7 13h1v1h-1zM9 13h1v1h-1zM11 13h1v1h-1zM13 13h1v1h-1zM15 13h2v1h-2zM3 15h14v1h-14zM3 16h14v1h-14z"/><path fill="#FF0000" d="M15 12h1v1h-1z"/></svg>
<svg style="position:absolute;left:312px;top:44px" width="20" height="19" viewBox="0 0 20 19" shape-rendering="crispEdges"><path fill="#FFFF00" d="M5 3h1v1h-1zM7 3h1v1h-1zM9 3h1v1h-1zM11 3h1v1h-1zM4 4h1v1h-1zM12 4h1v1h-1zM3 5h1v1h-1zM8 5h1v1h-1zM13 5h1v1h-1zM4 6h1v1h-1zM6 6h1v1h-1zM8 6h1v1h-1zM12 6h1v1h-1zM3 7h1v1h-1zM5 7h1v1h-1zM7 7h1v1h-1zM12 7h1v1h-1zM14 7h1v1h-1zM6 8h1v1h-1zM8 8h1v1h-1zM11 8h1v1h-1zM3 9h1v1h-1zM5 9h1v1h-1zM7 9h1v1h-1zM12 9h1v1h-1zM14 9h1v1h-1zM4 10h1v1h-1zM6 10h1v1h-1zM8 10h1v1h-1zM10 10h1v1h-1zM12 10h1v1h-1zM14 10h1v1h-1z"/><path fill="#FFFFFF" d="M6 3h1v1h-1zM8 3h1v1h-1zM10 3h1v1h-1zM5 4h1v1h-1zM11 4h1v1h-1zM4 5h1v1h-1zM7 5h1v1h-1zM9 5h1v1h-1zM12 5h1v1h-1zM3 6h1v1h-1zM5 6h1v1h-1zM7 6h1v1h-1zM9 6h1v1h-1zM13 6h1v1h-1zM4 7h1v1h-1zM6 7h1v1h-1zM8 7h1v1h-1zM11 7h1v1h-1zM13 7h1v1h-1zM3 8h1v1h-1zM7 8h1v1h-1zM12 8h1v1h-1zM15 8h1v1h-1zM4 9h1v1h-1zM6 9h1v1h-1zM8 9h1v1h-1zM11 9h1v1h-1zM13 9h1v1h-1zM3 10h1v1h-1zM5 10h1v1h-1zM7 10h1v1h-1zM9 10h1v1h-1zM11 10h1v1h-1zM13 10h1v1h-1zM3 11h6v1h-6zM11 11h4v1h-4zM3 12h6v1h-6zM11 12h4v1h-4zM3 13h12v1h-12zM9 14h1v1h-1zM3 15h5v1h-5zM11 15h4v1h-4z"/><path fill="#FF0000" d="M6 4h5v1h-5zM5 5h2v1h-2zM10 5h2v1h-2zM10 6h2v1h-2zM9 7h2v1h-2zM9 8h2v1h-2zM9 9h2v1h-2zM9 11h2v1h-2zM9 12h2v1h-2z"/><path fill="#000000" d="M4 8h2v1h-2zM13 8h2v1h-2zM2 9h1v1h-1zM15 9h1v1h-1zM2 10h1v1h-1zM15 10h1v1h-1zM2 11h1v1h-1zM15 11h1v1h-1zM2 12h1v1h-1zM15 12h1v1h-1zM2 13h1v1h-1zM15 13h1v1h-1zM2 14h7v1h-7zM10 14h6v1h-6zM2 15h1v1h-1zM8 15h1v1h-1zM10 15h1v1h-1zM15 15h1v1h-1zM8 16h1v1h-1zM10 16h1v1h-1z"/><path fill="#808080" d="M9 15h1v1h-1zM9 16h1v1h-1z"/><path fill="#0000FF" d="M2 16h6v1h-6zM11 16h6v1h-6zM2 17h15v1h-15zM7 18h5v1h-5z"/></svg>
<svg style="position:absolute;left:335px;top:44px" width="20" height="19" viewBox="0 0 20 19" shape-rendering="crispEdges"><path fill="#00FFFF" d="M2 3h4v1h-4zM2 4h3v1h-3zM2 5h2v1h-2zM2 6h1v1h-1z"/><path fill="#000000" d="M6 3h9v1h-9zM6 4h1v1h-1zM9 4h1v1h-1zM14 4h2v1h-2zM7 5h1v1h-1zM10 5h1v1h-1zM14 5h1v1h-1zM16 5h1v1h-1zM8 6h1v1h-1zM11 6h1v1h-1zM14 6h4v1h-4zM2 7h1v1h-1zM9 7h1v1h-1zM12 7h1v1h-1zM17 7h1v1h-1zM3 8h1v1h-1zM9 8h1v1h-1zM12 8h1v1h-1zM17 8h1v1h-1zM3 9h1v1h-1zM10 9h1v1h-1zM13 9h1v1h-1zM17 9h1v1h-1zM4 10h1v1h-1zM11 10h1v1h-1zM13 10h1v1h-1zM15 10h1v1h-1zM17 10h1v1h-1zM5 11h1v1h-1zM9 11h2v1h-2zM13 11h1v1h-1zM17 11h1v1h-1zM6 12h3v1h-3zM10 12h3v1h-3zM15 12h1v1h-1zM17 12h1v1h-1zM6 13h1v1h-1zM17 13h1v1h-1zM6 14h1v1h-1zM8 14h2v1h-2zM11 14h2v1h-2zM14 14h2v1h-2zM17 14h1v1h-1zM6 15h1v1h-1zM17 15h1v1h-1zM6 16h1v1h-1zM8 16h3v1h-3zM12 16h1v1h-1zM14 16h2v1h-2zM17 16h1v1h-1zM6 17h1v1h-1zM17 17h1v1h-1zM6 18h12v1h-12z"/><path fill="#FFFF00" d="M5 4h1v1h-1zM7 4h1v1h-1zM4 5h1v1h-1zM6 5h1v1h-1zM8 5h1v1h-1zM3 6h1v1h-1zM5 6h1v1h-1zM7 6h1v1h-1zM9 6h1v1h-1zM4 7h1v1h-1zM6 7h1v1h-1zM8 7h1v1h-1zM10 7h1v1h-1zM4 8h1v1h-1zM6 8h1v1h-1zM8 8h1v1h-1zM10 8h1v1h-1zM5 9h1v1h-1zM7 9h1v1h-1zM9 9h1v1h-1zM11 9h1v1h-1zM6 10h1v1h-1zM8 10h1v1h-1zM10 10h1v1h-1zM12 10h1v1h-1zM7 11h1v1h-1zM11 11h2v1h-2z"/><path fill="#FFFFFF" d="M8 4h1v1h-1zM10 4h4v1h-4zM5 5h1v1h-1zM9 5h1v1h-1zM11 5h3v1h-3zM15 5h1v1h-1zM4 6h1v1h-1zM6 6h1v1h-1zM10 6h1v1h-1zM12 6h2v1h-2zM3 7h1v1h-1zM5 7h1v1h-1zM7 7h1v1h-1zM11 7h1v1h-1zM13 7h4v1h-4zM5 8h1v1h-1zM7 8h1v1h-1zM11 8h1v1h-1zM13 8h4v1h-4zM4 9h1v1h-1zM6 9h1v1h-1zM8 9h1v1h-1zM12 9h1v1h-1zM14 9h3v1h-3zM5 10h1v1h-1zM7 10h1v1h-1zM9 10h1v1h-1zM14 10h1v1h-1zM16 10h1v1h-1zM6 11h1v1h-1zM8 11h1v1h-1zM14 11h3v1h-3zM9 12h1v1h-1zM13 12h2v1h-2zM16 12h1v1h-1zM7 13h10v1h-10zM7 14h1v1h-1zM10 14h1v1h-1zM13 14h1v1h-1zM16 14h1v1h-1zM7 15h10v1h-10zM7 16h1v1h-1zM11 16h1v1h-1zM13 16h1v1h-1zM16 16h1v1h-1zM7 17h10v1h-10z"/></svg>
<svg style="position:absolute;left:2px;top:3px" width="20" height="18" viewBox="0 0 20 18" shape-rendering="crispEdges"><path fill="#000000" d="M7 3h6v1h-6zM5 4h2v1h-2zM13 4h2v1h-2zM4 5h1v1h-1zM15 5h1v1h-1zM4 6h1v1h-1zM15 6h1v1h-1zM4 7h2v1h-2zM14 7h2v1h-2zM3 8h1v1h-1zM5 8h10v1h-10zM3 9h1v1h-1zM13 9h1v1h-1zM2 10h3v1h-3zM12 10h5v1h-5zM2 11h1v1h-1zM11 11h1v1h-1zM18 11h1v1h-1zM2 12h1v1h-1zM11 12h1v1h-1zM19 12h1v1h-1zM2 13h1v1h-1zM11 13h1v1h-1zM19 13h1v1h-1zM2 14h1v1h-1zM11 14h1v1h-1zM19 14h1v1h-1zM2 15h1v1h-1zM11 15h1v1h-1zM19 15h1v1h-1zM2 16h1v1h-1zM11 16h2v1h-2zM18 16h1v1h-1zM3 17h8v1h-8zM13 17h5v1h-5z"/><path fill="#C0C000" d="M7 4h1v1h-1zM12 4h1v1h-1zM5 5h1v1h-1zM13 5h1v1h-1zM6 6h1v1h-1zM12 6h2v1h-2zM7 7h6v1h-6zM4 8h1v1h-1zM5 9h1v1h-1zM11 9h1v1h-1zM3 11h2v1h-2zM9 11h2v1h-2zM12 11h2v1h-2zM15 11h2v1h-2zM12 12h1v1h-1zM17 12h1v1h-1zM3 13h2v1h-2zM9 13h2v1h-2zM12 13h1v1h-1zM17 13h1v1h-1zM12 14h1v1h-1zM17 14h1v1h-1zM3 15h1v1h-1zM9 15h1v1h-1zM13 15h5v1h-5zM4 16h6v1h-6z"/><path fill="#FFFF00" d="M8 4h4v1h-4zM6 5h2v1h-2zM10 5h3v1h-3zM7 6h5v1h-5zM6 9h2v1h-2zM9 9h2v1h-2zM5 11h1v1h-1zM7 11h2v1h-2zM14 11h1v1h-1zM13 12h2v1h-2zM16 12h1v1h-1zM5 13h1v1h-1zM7 13h2v1h-2zM13 13h1v1h-1zM15 13h2v1h-2zM13 14h4v1h-4zM4 15h5v1h-5z"/><path fill="#FFFFFF" d="M8 5h2v1h-2zM8 9h1v1h-1zM6 11h1v1h-1zM15 12h1v1h-1zM6 13h1v1h-1zM14 13h1v1h-1z"/><path fill="#808000" d="M14 5h1v1h-1zM5 6h1v1h-1zM14 6h1v1h-1zM6 7h1v1h-1zM13 7h1v1h-1zM4 9h1v1h-1zM12 9h1v1h-1zM5 10h7v1h-7zM17 11h1v1h-1zM3 12h8v1h-8zM18 12h1v1h-1zM18 13h1v1h-1zM3 14h8v1h-8zM18 14h1v1h-1zM10 15h1v1h-1zM12 15h1v1h-1zM18 15h1v1h-1zM3 16h1v1h-1zM10 16h1v1h-1zM13 16h5v1h-5z"/></svg>
</body></html>
